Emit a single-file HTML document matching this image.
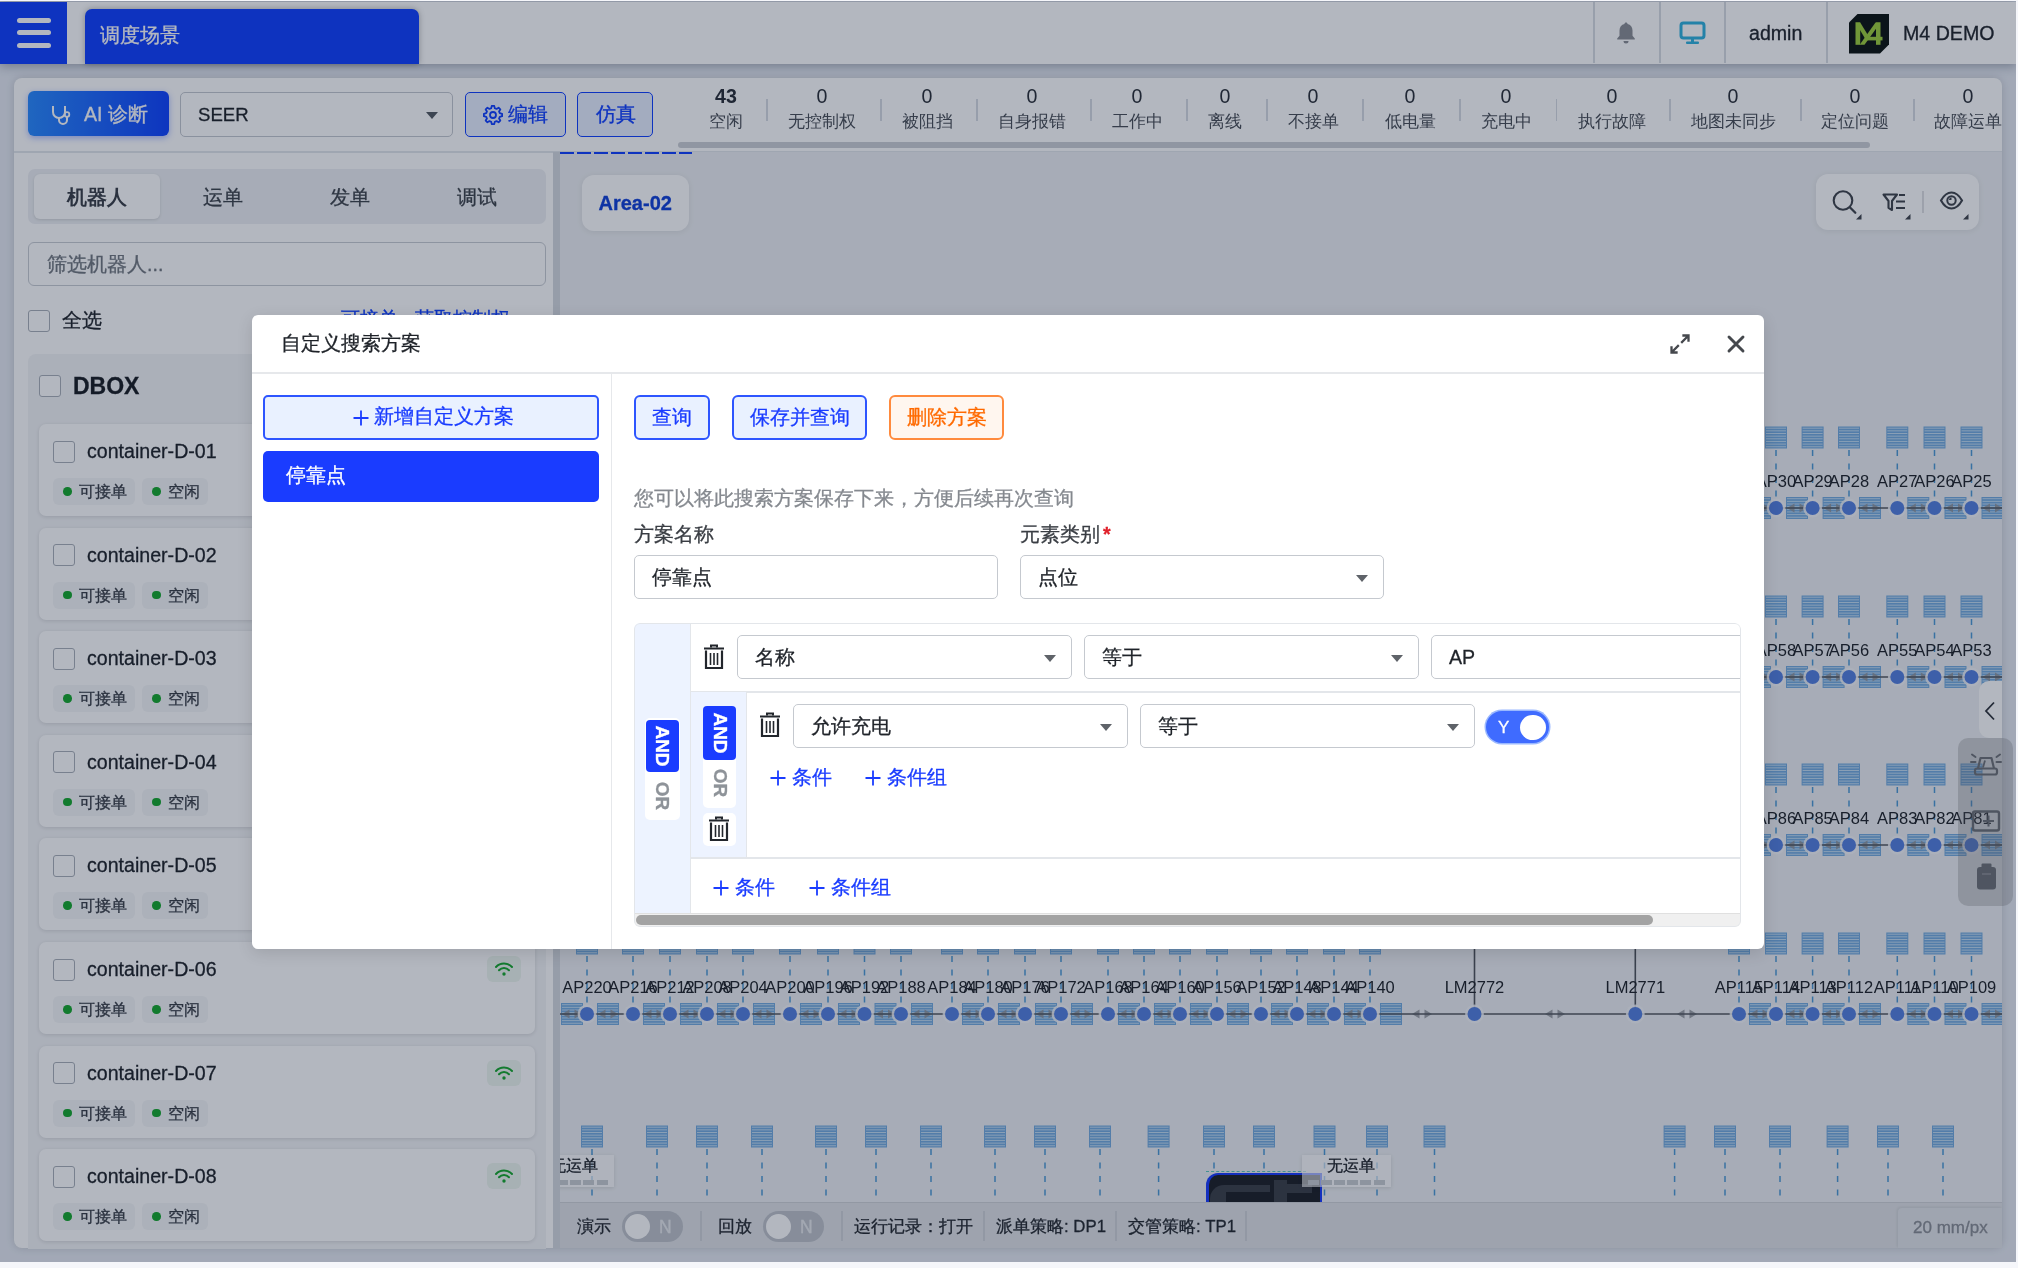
<!DOCTYPE html><html><head><meta charset="utf-8"><style>
*{box-sizing:border-box;margin:0;padding:0}
html,body{width:2018px;height:1268px;overflow:hidden;background:#f5f6fa;font-family:"Liberation Sans",sans-serif;color:#1f2329}
.a{position:absolute}
#app{position:absolute;left:0;top:1px;width:2016px;height:1261px;background:#e6eaf2;overflow:hidden;will-change:transform}
#ov{position:absolute;left:0;top:0;width:2016px;height:1261px;background:rgba(10,22,50,0.31)}
.t{position:absolute;white-space:nowrap;line-height:1;-webkit-text-stroke:0.3px currentColor}
.cb{position:absolute;width:22px;height:22px;border:1.5px solid #aab0b8;border-radius:3px;background:#fff}
.card{position:absolute;left:39px;width:496px;height:92px;background:#fff;border-radius:7px;box-shadow:0 1px 4px rgba(0,0,0,.12)}
.tag{position:absolute;height:27px;border-radius:6px;background:#f5f6f8;font-size:16.4px;color:#3a3f47;line-height:27px;-webkit-text-stroke:0.3px currentColor}
.dot{position:absolute;width:8.5px;height:8.5px;border-radius:50%;background:#17a82e;top:9px}
.sep{position:absolute;width:1.5px;background:#d7dbe2}
.stn{position:absolute;font-size:19.6px;color:#2a2f37;text-align:center;line-height:1}
.stl{position:absolute;font-size:16.8px;color:#4a4f57;text-align:center;line-height:1}
</style></head><body>
<div id="app">
<div class="a" style="left:0;top:1px;width:2016px;height:61.5px;background:#ffffff;box-shadow:0 2px 10px rgba(30,40,60,.35)"></div>
<div class="a" style="left:0;top:1px;width:67px;height:61.5px;background:#1040ff"></div>
<div class="a" style="left:17px;top:17.2px;width:34px;height:5px;border-radius:3px;background:#fff"></div>
<div class="a" style="left:17px;top:29.2px;width:34px;height:5px;border-radius:3px;background:#fff"></div>
<div class="a" style="left:17px;top:41.5px;width:34px;height:5px;border-radius:3px;background:#fff"></div>
<div class="a" style="left:85px;top:8px;width:334px;height:54.5px;background:#1040ff;border-radius:7px 7px 0 0;box-shadow:0 0 6px rgba(0,0,0,.3)"></div>
<div class="t" style="left:100px;top:25px;font-size:19.6px;color:#fff">调度场景</div>
<div class="a" style="left:1593px;top:1px;width:1.5px;height:61px;background:#d8dce3"></div>
<div class="a" style="left:1659px;top:1px;width:1.5px;height:61px;background:#d8dce3"></div>
<div class="a" style="left:1724px;top:1px;width:1.5px;height:61px;background:#d8dce3"></div>
<div class="a" style="left:1826px;top:1px;width:1.5px;height:61px;background:#d8dce3"></div>
<svg class="a" style="left:1615px;top:20px" width="22" height="24" viewBox="0 0 22 24"><path d="M11 1.5c.9 0 1.5.6 1.5 1.4 3.2.7 5 3.3 5 6.6v5.2l2.3 2.8v1H2.2v-1l2.3-2.8V9.5c0-3.3 1.8-5.9 5-6.6 0-.8.6-1.4 1.5-1.4z" fill="#8b8e94"/><path d="M8.5 20h5a2.5 2.5 0 0 1-5 0z" fill="#8b8e94"/></svg>
<svg class="a" style="left:1679px;top:20px" width="27" height="24" viewBox="0 0 27 24"><rect x="2" y="2" width="23" height="15" rx="2.5" fill="none" stroke="#30b2de" stroke-width="3"/><rect x="12" y="17" width="3" height="4" fill="#30b2de"/><rect x="7" y="20.5" width="13" height="2.5" rx="1" fill="#30b2de"/></svg>
<div class="t" style="left:1749px;top:23px;font-size:19.6px;color:#22262c">admin</div>
<svg class="a" style="left:1849px;top:13px" width="40" height="40" viewBox="0 0 40 40"><path d="M8.5 0H40V30.5L31 39.5H0V8.5Z" fill="#0d1411"/><g fill="#9fcf3c"><rect x="6.5" y="8.5" width="4.7" height="22.3"/><path d="M6.5 8.5h4.7l8.3 13.5-2.4 4.2z"/><path d="M26.5 8.5h5L15.5 30.8h-4.8z"/><rect x="17" y="22.8" width="16.5" height="3.6"/><rect x="27" y="8.5" width="4.5" height="22.3"/></g></svg>
<div class="t" style="left:1903px;top:23px;font-size:19.6px;color:#22262c">M4 DEMO</div>
<div class="a" style="left:14px;top:77px;width:1988px;height:1170px;background:#fff;border-radius:8px;box-shadow:0 0 8px rgba(0,0,0,.15)"></div>
<div class="a" style="left:28px;top:90px;width:141px;height:45px;border-radius:6px;background:linear-gradient(90deg,#2a8aff,#1043ff);box-shadow:0 2px 6px rgba(16,64,255,.35)"></div>
<svg class="a" style="left:50px;top:103px" width="22" height="22" viewBox="0 0 22 22"><path d="M3 2v6a6 6 0 0 0 12 0V2" fill="none" stroke="#fff" stroke-width="2"/><path d="M9 14v2a4 4 0 0 0 8 0v-3" fill="none" stroke="#fff" stroke-width="2"/><circle cx="17" cy="10.5" r="2.3" fill="none" stroke="#fff" stroke-width="1.8"/></svg>
<div class="t" style="left:84px;top:104px;font-size:19.6px;color:#fff">AI 诊断</div>
<div class="a" style="left:180px;top:91px;width:273px;height:45px;border:1.5px solid #c4c8cf;border-radius:5px;background:#fff"></div>
<div class="t" style="left:198px;top:104.5px;font-size:18.6px;color:#1f2329">SEER</div>
<div class="a" style="left:426px;top:111px;width:0;height:0;border-left:6px solid transparent;border-right:6px solid transparent;border-top:7px solid #555a61"></div>
<div class="a" style="left:465px;top:91px;width:101px;height:45px;border:1.5px solid #1040ff;border-radius:5px;background:#e8efff"></div>
<svg class="a" style="left:483px;top:104px" width="20" height="20" viewBox="0 0 20 20"><path d="M19.12 8.78 L19.12 11.22 L16.77 11.79 L16.05 13.52 L17.31 15.58 L15.58 17.31 L13.52 16.05 L11.79 16.77 L11.22 19.12 L8.78 19.12 L8.21 16.77 L6.48 16.05 L4.42 17.31 L2.69 15.58 L3.95 13.52 L3.23 11.79 L0.88 11.22 L0.88 8.78 L3.23 8.21 L3.95 6.48 L2.69 4.42 L4.42 2.69 L6.48 3.95 L8.21 3.23 L8.78 0.88 L11.22 0.88 L11.79 3.23 L13.52 3.95 L15.58 2.69 L17.31 4.42 L16.05 6.48 L16.77 8.21Z" fill="none" stroke="#1040ff" stroke-width="1.8" stroke-linejoin="round"/><circle cx="10" cy="10" r="3" fill="none" stroke="#1040ff" stroke-width="1.8"/></svg>
<div class="t" style="left:508px;top:104px;font-size:19.6px;color:#1040ff">编辑</div>
<div class="a" style="left:577px;top:91px;width:76px;height:45px;border:1.5px solid #1040ff;border-radius:5px;background:#e8efff"></div>
<div class="t" style="left:596px;top:104px;font-size:19.6px;color:#1040ff">仿真</div>
<div class="stn" style="left:666px;top:86px;width:120px;font-weight:bold;">43</div>
<div class="stl" style="left:656px;top:113px;width:140px;">空闲</div>
<div class="stn" style="left:762px;top:86px;width:120px;">0</div>
<div class="stl" style="left:752px;top:113px;width:140px;">无控制权</div>
<div class="stn" style="left:867px;top:86px;width:120px;">0</div>
<div class="stl" style="left:857px;top:113px;width:140px;">被阻挡</div>
<div class="stn" style="left:972px;top:86px;width:120px;">0</div>
<div class="stl" style="left:962px;top:113px;width:140px;">自身报错</div>
<div class="stn" style="left:1077px;top:86px;width:120px;">0</div>
<div class="stl" style="left:1067px;top:113px;width:140px;">工作中</div>
<div class="stn" style="left:1165px;top:86px;width:120px;">0</div>
<div class="stl" style="left:1155px;top:113px;width:140px;">离线</div>
<div class="stn" style="left:1253px;top:86px;width:120px;">0</div>
<div class="stl" style="left:1243px;top:113px;width:140px;">不接单</div>
<div class="stn" style="left:1350px;top:86px;width:120px;">0</div>
<div class="stl" style="left:1340px;top:113px;width:140px;">低电量</div>
<div class="stn" style="left:1446px;top:86px;width:120px;">0</div>
<div class="stl" style="left:1436px;top:113px;width:140px;">充电中</div>
<div class="stn" style="left:1552px;top:86px;width:120px;">0</div>
<div class="stl" style="left:1542px;top:113px;width:140px;">执行故障</div>
<div class="stn" style="left:1673px;top:86px;width:120px;">0</div>
<div class="stl" style="left:1663px;top:113px;width:140px;">地图未同步</div>
<div class="stn" style="left:1795px;top:86px;width:120px;">0</div>
<div class="stl" style="left:1785px;top:113px;width:140px;">定位问题</div>
<div class="stn" style="left:1908px;top:86px;width:120px;">0</div>
<div class="stl" style="left:1898px;top:113px;width:140px;">故障运单</div>
<div class="sep" style="left:766.0px;top:98px;height:22px"></div>
<div class="sep" style="left:880.0px;top:98px;height:22px"></div>
<div class="sep" style="left:976.0px;top:98px;height:22px"></div>
<div class="sep" style="left:1090.0px;top:98px;height:22px"></div>
<div class="sep" style="left:1186.0px;top:98px;height:22px"></div>
<div class="sep" style="left:1266.0px;top:98px;height:22px"></div>
<div class="sep" style="left:1362.0px;top:98px;height:22px"></div>
<div class="sep" style="left:1459.0px;top:98px;height:22px"></div>
<div class="sep" style="left:1555.5px;top:98px;height:22px"></div>
<div class="sep" style="left:1669.0px;top:98px;height:22px"></div>
<div class="sep" style="left:1800.0px;top:98px;height:22px"></div>
<div class="sep" style="left:1913.0px;top:98px;height:22px"></div>
<div class="a" style="left:678px;top:141px;width:1192px;height:6px;border-radius:3px;background:#cdd0d5"></div>
<div class="a" style="left:14px;top:150px;width:1988px;height:1.5px;background:#e3e6eb"></div>
<div class="a" style="left:28px;top:168px;width:518px;height:55px;border-radius:7px;background:#eef0f3"></div>
<div class="a" style="left:34px;top:173px;width:126px;height:45px;border-radius:6px;background:#fff;box-shadow:0 1px 3px rgba(0,0,0,.12)"></div>
<div class="t" style="left:37px;width:120px;text-align:center;top:187px;font-size:19.6px;font-weight:bold;color:#3a3f47;-webkit-text-stroke:0;">机器人</div>
<div class="t" style="left:163px;width:120px;text-align:center;top:187px;font-size:19.6px;color:#3f444c;">运单</div>
<div class="t" style="left:290px;width:120px;text-align:center;top:187px;font-size:19.6px;color:#3f444c;">发单</div>
<div class="t" style="left:417px;width:120px;text-align:center;top:187px;font-size:19.6px;color:#3f444c;">调试</div>
<div class="a" style="left:28px;top:241px;width:518px;height:44px;border:1.5px solid #c9cdd3;border-radius:6px;background:#fff"></div>
<div class="t" style="left:47px;top:254px;font-size:19.6px;color:#737980">筛选机器人...</div>
<div class="cb" style="left:28px;top:309px"></div>
<div class="t" style="left:62px;top:310px;font-size:19.6px;color:#22262c">全选</div>
<div class="t" style="left:341px;top:309px;font-size:18.7px;color:#1040ff">可接单 · 获取控制权</div>
<div class="a" style="left:28px;top:353px;width:518px;height:895px;border-radius:8px 8px 0 0;background:#f4f5f7"></div>
<div class="cb" style="left:39px;top:374px"></div>
<div class="t" style="left:73px;top:374px;font-size:23px;font-weight:bold;color:#1a1e24">DBOX</div>
<div class="card" style="top:423.0px"></div>
<div class="cb" style="left:53px;top:439.5px"></div>
<div class="t" style="left:87px;top:441.0px;font-size:19.6px;color:#1f2329">container-D-01</div>
<div class="tag" style="left:53px;top:477.0px;width:82px"><span class="dot" style="left:10px"></span><span style="position:absolute;left:25.5px;top:0">可接单</span></div>
<div class="tag" style="left:142px;top:477.0px;width:66px"><span class="dot" style="left:10px"></span><span style="position:absolute;left:25.5px;top:0">空闲</span></div>
<div class="card" style="top:526.6px"></div>
<div class="cb" style="left:53px;top:543.1px"></div>
<div class="t" style="left:87px;top:544.6px;font-size:19.6px;color:#1f2329">container-D-02</div>
<div class="tag" style="left:53px;top:580.6px;width:82px"><span class="dot" style="left:10px"></span><span style="position:absolute;left:25.5px;top:0">可接单</span></div>
<div class="tag" style="left:142px;top:580.6px;width:66px"><span class="dot" style="left:10px"></span><span style="position:absolute;left:25.5px;top:0">空闲</span></div>
<div class="card" style="top:630.2px"></div>
<div class="cb" style="left:53px;top:646.7px"></div>
<div class="t" style="left:87px;top:648.2px;font-size:19.6px;color:#1f2329">container-D-03</div>
<div class="tag" style="left:53px;top:684.2px;width:82px"><span class="dot" style="left:10px"></span><span style="position:absolute;left:25.5px;top:0">可接单</span></div>
<div class="tag" style="left:142px;top:684.2px;width:66px"><span class="dot" style="left:10px"></span><span style="position:absolute;left:25.5px;top:0">空闲</span></div>
<div class="card" style="top:733.8px"></div>
<div class="cb" style="left:53px;top:750.3px"></div>
<div class="t" style="left:87px;top:751.8px;font-size:19.6px;color:#1f2329">container-D-04</div>
<div class="tag" style="left:53px;top:787.8px;width:82px"><span class="dot" style="left:10px"></span><span style="position:absolute;left:25.5px;top:0">可接单</span></div>
<div class="tag" style="left:142px;top:787.8px;width:66px"><span class="dot" style="left:10px"></span><span style="position:absolute;left:25.5px;top:0">空闲</span></div>
<div class="card" style="top:837.4px"></div>
<div class="cb" style="left:53px;top:853.9px"></div>
<div class="t" style="left:87px;top:855.4px;font-size:19.6px;color:#1f2329">container-D-05</div>
<div class="tag" style="left:53px;top:891.4px;width:82px"><span class="dot" style="left:10px"></span><span style="position:absolute;left:25.5px;top:0">可接单</span></div>
<div class="tag" style="left:142px;top:891.4px;width:66px"><span class="dot" style="left:10px"></span><span style="position:absolute;left:25.5px;top:0">空闲</span></div>
<div class="card" style="top:941.0px"></div>
<div class="cb" style="left:53px;top:957.5px"></div>
<div class="t" style="left:87px;top:959.0px;font-size:19.6px;color:#1f2329">container-D-06</div>
<div class="tag" style="left:53px;top:995.0px;width:82px"><span class="dot" style="left:10px"></span><span style="position:absolute;left:25.5px;top:0">可接单</span></div>
<div class="tag" style="left:142px;top:995.0px;width:66px"><span class="dot" style="left:10px"></span><span style="position:absolute;left:25.5px;top:0">空闲</span></div>
<div class="a" style="left:487px;top:955.0px;width:34px;height:26px;border-radius:6px;background:#eef6ef"></div>
<svg class="a" style="left:494px;top:959.0px" width="20" height="18" viewBox="0 0 20 18"><path d="M2 7a11 11 0 0 1 16 0" fill="none" stroke="#17a82e" stroke-width="2" stroke-linecap="round"/><path d="M5 10.3a6.8 6.8 0 0 1 10 0" fill="none" stroke="#17a82e" stroke-width="2" stroke-linecap="round"/><circle cx="10" cy="14" r="1.7" fill="#17a82e"/></svg>
<div class="card" style="top:1044.6px"></div>
<div class="cb" style="left:53px;top:1061.1px"></div>
<div class="t" style="left:87px;top:1062.6px;font-size:19.6px;color:#1f2329">container-D-07</div>
<div class="tag" style="left:53px;top:1098.6px;width:82px"><span class="dot" style="left:10px"></span><span style="position:absolute;left:25.5px;top:0">可接单</span></div>
<div class="tag" style="left:142px;top:1098.6px;width:66px"><span class="dot" style="left:10px"></span><span style="position:absolute;left:25.5px;top:0">空闲</span></div>
<div class="a" style="left:487px;top:1058.6px;width:34px;height:26px;border-radius:6px;background:#eef6ef"></div>
<svg class="a" style="left:494px;top:1062.6px" width="20" height="18" viewBox="0 0 20 18"><path d="M2 7a11 11 0 0 1 16 0" fill="none" stroke="#17a82e" stroke-width="2" stroke-linecap="round"/><path d="M5 10.3a6.8 6.8 0 0 1 10 0" fill="none" stroke="#17a82e" stroke-width="2" stroke-linecap="round"/><circle cx="10" cy="14" r="1.7" fill="#17a82e"/></svg>
<div class="card" style="top:1148.2px"></div>
<div class="cb" style="left:53px;top:1164.7px"></div>
<div class="t" style="left:87px;top:1166.2px;font-size:19.6px;color:#1f2329">container-D-08</div>
<div class="tag" style="left:53px;top:1202.2px;width:82px"><span class="dot" style="left:10px"></span><span style="position:absolute;left:25.5px;top:0">可接单</span></div>
<div class="tag" style="left:142px;top:1202.2px;width:66px"><span class="dot" style="left:10px"></span><span style="position:absolute;left:25.5px;top:0">空闲</span></div>
<div class="a" style="left:487px;top:1162.2px;width:34px;height:26px;border-radius:6px;background:#eef6ef"></div>
<svg class="a" style="left:494px;top:1166.2px" width="20" height="18" viewBox="0 0 20 18"><path d="M2 7a11 11 0 0 1 16 0" fill="none" stroke="#17a82e" stroke-width="2" stroke-linecap="round"/><path d="M5 10.3a6.8 6.8 0 0 1 10 0" fill="none" stroke="#17a82e" stroke-width="2" stroke-linecap="round"/><circle cx="10" cy="14" r="1.7" fill="#17a82e"/></svg>
<div class="a" style="left:553px;top:151px;width:7px;height:1096px;background:#d5d9df"></div>
<div class="a" style="left:560px;top:151px;width:1442px;height:1051px;background:#eef0f3;overflow:hidden">
<svg class="a" style="left:0;top:0" width="1442" height="1051" font-family="Liberation Sans, sans-serif"><rect x="1168.0" y="274.5" width="22" height="22" fill="#74abdf"/><rect x="1169.0" y="275.70" width="20" height="1" fill="#c2dcf2"/><rect x="1169.0" y="278.35" width="20" height="1" fill="#c2dcf2"/><rect x="1169.0" y="281.00" width="20" height="1" fill="#c2dcf2"/><rect x="1169.0" y="283.65" width="20" height="1" fill="#c2dcf2"/><rect x="1169.0" y="286.30" width="20" height="1" fill="#c2dcf2"/><rect x="1169.0" y="288.95" width="20" height="1" fill="#c2dcf2"/><rect x="1169.0" y="291.60" width="20" height="1" fill="#c2dcf2"/><rect x="1169.0" y="294.25" width="20" height="1" fill="#c2dcf2"/><rect x="1189.0" y="345.0" width="22" height="22" fill="#74abdf"/><rect x="1190.0" y="346.20" width="20" height="1" fill="#c2dcf2"/><rect x="1190.0" y="348.85" width="20" height="1" fill="#c2dcf2"/><rect x="1190.0" y="351.50" width="20" height="1" fill="#c2dcf2"/><rect x="1190.0" y="354.15" width="20" height="1" fill="#c2dcf2"/><rect x="1190.0" y="356.80" width="20" height="1" fill="#c2dcf2"/><rect x="1190.0" y="359.45" width="20" height="1" fill="#c2dcf2"/><rect x="1190.0" y="362.10" width="20" height="1" fill="#c2dcf2"/><rect x="1190.0" y="364.75" width="20" height="1" fill="#c2dcf2"/><rect x="1205.0" y="274.5" width="22" height="22" fill="#74abdf"/><rect x="1206.0" y="275.70" width="20" height="1" fill="#c2dcf2"/><rect x="1206.0" y="278.35" width="20" height="1" fill="#c2dcf2"/><rect x="1206.0" y="281.00" width="20" height="1" fill="#c2dcf2"/><rect x="1206.0" y="283.65" width="20" height="1" fill="#c2dcf2"/><rect x="1206.0" y="286.30" width="20" height="1" fill="#c2dcf2"/><rect x="1206.0" y="288.95" width="20" height="1" fill="#c2dcf2"/><rect x="1206.0" y="291.60" width="20" height="1" fill="#c2dcf2"/><rect x="1206.0" y="294.25" width="20" height="1" fill="#c2dcf2"/><rect x="1226.0" y="345.0" width="22" height="22" fill="#74abdf"/><rect x="1227.0" y="346.20" width="20" height="1" fill="#c2dcf2"/><rect x="1227.0" y="348.85" width="20" height="1" fill="#c2dcf2"/><rect x="1227.0" y="351.50" width="20" height="1" fill="#c2dcf2"/><rect x="1227.0" y="354.15" width="20" height="1" fill="#c2dcf2"/><rect x="1227.0" y="356.80" width="20" height="1" fill="#c2dcf2"/><rect x="1227.0" y="359.45" width="20" height="1" fill="#c2dcf2"/><rect x="1227.0" y="362.10" width="20" height="1" fill="#c2dcf2"/><rect x="1227.0" y="364.75" width="20" height="1" fill="#c2dcf2"/><rect x="1241.6" y="274.5" width="22" height="22" fill="#74abdf"/><rect x="1242.6" y="275.70" width="20" height="1" fill="#c2dcf2"/><rect x="1242.6" y="278.35" width="20" height="1" fill="#c2dcf2"/><rect x="1242.6" y="281.00" width="20" height="1" fill="#c2dcf2"/><rect x="1242.6" y="283.65" width="20" height="1" fill="#c2dcf2"/><rect x="1242.6" y="286.30" width="20" height="1" fill="#c2dcf2"/><rect x="1242.6" y="288.95" width="20" height="1" fill="#c2dcf2"/><rect x="1242.6" y="291.60" width="20" height="1" fill="#c2dcf2"/><rect x="1242.6" y="294.25" width="20" height="1" fill="#c2dcf2"/><rect x="1262.6" y="345.0" width="22" height="22" fill="#74abdf"/><rect x="1263.6" y="346.20" width="20" height="1" fill="#c2dcf2"/><rect x="1263.6" y="348.85" width="20" height="1" fill="#c2dcf2"/><rect x="1263.6" y="351.50" width="20" height="1" fill="#c2dcf2"/><rect x="1263.6" y="354.15" width="20" height="1" fill="#c2dcf2"/><rect x="1263.6" y="356.80" width="20" height="1" fill="#c2dcf2"/><rect x="1263.6" y="359.45" width="20" height="1" fill="#c2dcf2"/><rect x="1263.6" y="362.10" width="20" height="1" fill="#c2dcf2"/><rect x="1263.6" y="364.75" width="20" height="1" fill="#c2dcf2"/><rect x="1278.0" y="274.5" width="22" height="22" fill="#74abdf"/><rect x="1279.0" y="275.70" width="20" height="1" fill="#c2dcf2"/><rect x="1279.0" y="278.35" width="20" height="1" fill="#c2dcf2"/><rect x="1279.0" y="281.00" width="20" height="1" fill="#c2dcf2"/><rect x="1279.0" y="283.65" width="20" height="1" fill="#c2dcf2"/><rect x="1279.0" y="286.30" width="20" height="1" fill="#c2dcf2"/><rect x="1279.0" y="288.95" width="20" height="1" fill="#c2dcf2"/><rect x="1279.0" y="291.60" width="20" height="1" fill="#c2dcf2"/><rect x="1279.0" y="294.25" width="20" height="1" fill="#c2dcf2"/><rect x="1299.0" y="345.0" width="22" height="22" fill="#74abdf"/><rect x="1300.0" y="346.20" width="20" height="1" fill="#c2dcf2"/><rect x="1300.0" y="348.85" width="20" height="1" fill="#c2dcf2"/><rect x="1300.0" y="351.50" width="20" height="1" fill="#c2dcf2"/><rect x="1300.0" y="354.15" width="20" height="1" fill="#c2dcf2"/><rect x="1300.0" y="356.80" width="20" height="1" fill="#c2dcf2"/><rect x="1300.0" y="359.45" width="20" height="1" fill="#c2dcf2"/><rect x="1300.0" y="362.10" width="20" height="1" fill="#c2dcf2"/><rect x="1300.0" y="364.75" width="20" height="1" fill="#c2dcf2"/><rect x="1326.3" y="274.5" width="22" height="22" fill="#74abdf"/><rect x="1327.3" y="275.70" width="20" height="1" fill="#c2dcf2"/><rect x="1327.3" y="278.35" width="20" height="1" fill="#c2dcf2"/><rect x="1327.3" y="281.00" width="20" height="1" fill="#c2dcf2"/><rect x="1327.3" y="283.65" width="20" height="1" fill="#c2dcf2"/><rect x="1327.3" y="286.30" width="20" height="1" fill="#c2dcf2"/><rect x="1327.3" y="288.95" width="20" height="1" fill="#c2dcf2"/><rect x="1327.3" y="291.60" width="20" height="1" fill="#c2dcf2"/><rect x="1327.3" y="294.25" width="20" height="1" fill="#c2dcf2"/><rect x="1347.3" y="345.0" width="22" height="22" fill="#74abdf"/><rect x="1348.3" y="346.20" width="20" height="1" fill="#c2dcf2"/><rect x="1348.3" y="348.85" width="20" height="1" fill="#c2dcf2"/><rect x="1348.3" y="351.50" width="20" height="1" fill="#c2dcf2"/><rect x="1348.3" y="354.15" width="20" height="1" fill="#c2dcf2"/><rect x="1348.3" y="356.80" width="20" height="1" fill="#c2dcf2"/><rect x="1348.3" y="359.45" width="20" height="1" fill="#c2dcf2"/><rect x="1348.3" y="362.10" width="20" height="1" fill="#c2dcf2"/><rect x="1348.3" y="364.75" width="20" height="1" fill="#c2dcf2"/><rect x="1363.5" y="274.5" width="22" height="22" fill="#74abdf"/><rect x="1364.5" y="275.70" width="20" height="1" fill="#c2dcf2"/><rect x="1364.5" y="278.35" width="20" height="1" fill="#c2dcf2"/><rect x="1364.5" y="281.00" width="20" height="1" fill="#c2dcf2"/><rect x="1364.5" y="283.65" width="20" height="1" fill="#c2dcf2"/><rect x="1364.5" y="286.30" width="20" height="1" fill="#c2dcf2"/><rect x="1364.5" y="288.95" width="20" height="1" fill="#c2dcf2"/><rect x="1364.5" y="291.60" width="20" height="1" fill="#c2dcf2"/><rect x="1364.5" y="294.25" width="20" height="1" fill="#c2dcf2"/><rect x="1384.5" y="345.0" width="22" height="22" fill="#74abdf"/><rect x="1385.5" y="346.20" width="20" height="1" fill="#c2dcf2"/><rect x="1385.5" y="348.85" width="20" height="1" fill="#c2dcf2"/><rect x="1385.5" y="351.50" width="20" height="1" fill="#c2dcf2"/><rect x="1385.5" y="354.15" width="20" height="1" fill="#c2dcf2"/><rect x="1385.5" y="356.80" width="20" height="1" fill="#c2dcf2"/><rect x="1385.5" y="359.45" width="20" height="1" fill="#c2dcf2"/><rect x="1385.5" y="362.10" width="20" height="1" fill="#c2dcf2"/><rect x="1385.5" y="364.75" width="20" height="1" fill="#c2dcf2"/><rect x="1400.5" y="274.5" width="22" height="22" fill="#74abdf"/><rect x="1401.5" y="275.70" width="20" height="1" fill="#c2dcf2"/><rect x="1401.5" y="278.35" width="20" height="1" fill="#c2dcf2"/><rect x="1401.5" y="281.00" width="20" height="1" fill="#c2dcf2"/><rect x="1401.5" y="283.65" width="20" height="1" fill="#c2dcf2"/><rect x="1401.5" y="286.30" width="20" height="1" fill="#c2dcf2"/><rect x="1401.5" y="288.95" width="20" height="1" fill="#c2dcf2"/><rect x="1401.5" y="291.60" width="20" height="1" fill="#c2dcf2"/><rect x="1401.5" y="294.25" width="20" height="1" fill="#c2dcf2"/><rect x="1421.5" y="345.0" width="22" height="22" fill="#74abdf"/><rect x="1422.5" y="346.20" width="20" height="1" fill="#c2dcf2"/><rect x="1422.5" y="348.85" width="20" height="1" fill="#c2dcf2"/><rect x="1422.5" y="351.50" width="20" height="1" fill="#c2dcf2"/><rect x="1422.5" y="354.15" width="20" height="1" fill="#c2dcf2"/><rect x="1422.5" y="356.80" width="20" height="1" fill="#c2dcf2"/><rect x="1422.5" y="359.45" width="20" height="1" fill="#c2dcf2"/><rect x="1422.5" y="362.10" width="20" height="1" fill="#c2dcf2"/><rect x="1422.5" y="364.75" width="20" height="1" fill="#c2dcf2"/><rect x="1168.0" y="443.5" width="22" height="22" fill="#74abdf"/><rect x="1169.0" y="444.70" width="20" height="1" fill="#c2dcf2"/><rect x="1169.0" y="447.35" width="20" height="1" fill="#c2dcf2"/><rect x="1169.0" y="450.00" width="20" height="1" fill="#c2dcf2"/><rect x="1169.0" y="452.65" width="20" height="1" fill="#c2dcf2"/><rect x="1169.0" y="455.30" width="20" height="1" fill="#c2dcf2"/><rect x="1169.0" y="457.95" width="20" height="1" fill="#c2dcf2"/><rect x="1169.0" y="460.60" width="20" height="1" fill="#c2dcf2"/><rect x="1169.0" y="463.25" width="20" height="1" fill="#c2dcf2"/><rect x="1189.0" y="514.0" width="22" height="22" fill="#74abdf"/><rect x="1190.0" y="515.20" width="20" height="1" fill="#c2dcf2"/><rect x="1190.0" y="517.85" width="20" height="1" fill="#c2dcf2"/><rect x="1190.0" y="520.50" width="20" height="1" fill="#c2dcf2"/><rect x="1190.0" y="523.15" width="20" height="1" fill="#c2dcf2"/><rect x="1190.0" y="525.80" width="20" height="1" fill="#c2dcf2"/><rect x="1190.0" y="528.45" width="20" height="1" fill="#c2dcf2"/><rect x="1190.0" y="531.10" width="20" height="1" fill="#c2dcf2"/><rect x="1190.0" y="533.75" width="20" height="1" fill="#c2dcf2"/><rect x="1205.0" y="443.5" width="22" height="22" fill="#74abdf"/><rect x="1206.0" y="444.70" width="20" height="1" fill="#c2dcf2"/><rect x="1206.0" y="447.35" width="20" height="1" fill="#c2dcf2"/><rect x="1206.0" y="450.00" width="20" height="1" fill="#c2dcf2"/><rect x="1206.0" y="452.65" width="20" height="1" fill="#c2dcf2"/><rect x="1206.0" y="455.30" width="20" height="1" fill="#c2dcf2"/><rect x="1206.0" y="457.95" width="20" height="1" fill="#c2dcf2"/><rect x="1206.0" y="460.60" width="20" height="1" fill="#c2dcf2"/><rect x="1206.0" y="463.25" width="20" height="1" fill="#c2dcf2"/><rect x="1226.0" y="514.0" width="22" height="22" fill="#74abdf"/><rect x="1227.0" y="515.20" width="20" height="1" fill="#c2dcf2"/><rect x="1227.0" y="517.85" width="20" height="1" fill="#c2dcf2"/><rect x="1227.0" y="520.50" width="20" height="1" fill="#c2dcf2"/><rect x="1227.0" y="523.15" width="20" height="1" fill="#c2dcf2"/><rect x="1227.0" y="525.80" width="20" height="1" fill="#c2dcf2"/><rect x="1227.0" y="528.45" width="20" height="1" fill="#c2dcf2"/><rect x="1227.0" y="531.10" width="20" height="1" fill="#c2dcf2"/><rect x="1227.0" y="533.75" width="20" height="1" fill="#c2dcf2"/><rect x="1241.6" y="443.5" width="22" height="22" fill="#74abdf"/><rect x="1242.6" y="444.70" width="20" height="1" fill="#c2dcf2"/><rect x="1242.6" y="447.35" width="20" height="1" fill="#c2dcf2"/><rect x="1242.6" y="450.00" width="20" height="1" fill="#c2dcf2"/><rect x="1242.6" y="452.65" width="20" height="1" fill="#c2dcf2"/><rect x="1242.6" y="455.30" width="20" height="1" fill="#c2dcf2"/><rect x="1242.6" y="457.95" width="20" height="1" fill="#c2dcf2"/><rect x="1242.6" y="460.60" width="20" height="1" fill="#c2dcf2"/><rect x="1242.6" y="463.25" width="20" height="1" fill="#c2dcf2"/><rect x="1262.6" y="514.0" width="22" height="22" fill="#74abdf"/><rect x="1263.6" y="515.20" width="20" height="1" fill="#c2dcf2"/><rect x="1263.6" y="517.85" width="20" height="1" fill="#c2dcf2"/><rect x="1263.6" y="520.50" width="20" height="1" fill="#c2dcf2"/><rect x="1263.6" y="523.15" width="20" height="1" fill="#c2dcf2"/><rect x="1263.6" y="525.80" width="20" height="1" fill="#c2dcf2"/><rect x="1263.6" y="528.45" width="20" height="1" fill="#c2dcf2"/><rect x="1263.6" y="531.10" width="20" height="1" fill="#c2dcf2"/><rect x="1263.6" y="533.75" width="20" height="1" fill="#c2dcf2"/><rect x="1278.0" y="443.5" width="22" height="22" fill="#74abdf"/><rect x="1279.0" y="444.70" width="20" height="1" fill="#c2dcf2"/><rect x="1279.0" y="447.35" width="20" height="1" fill="#c2dcf2"/><rect x="1279.0" y="450.00" width="20" height="1" fill="#c2dcf2"/><rect x="1279.0" y="452.65" width="20" height="1" fill="#c2dcf2"/><rect x="1279.0" y="455.30" width="20" height="1" fill="#c2dcf2"/><rect x="1279.0" y="457.95" width="20" height="1" fill="#c2dcf2"/><rect x="1279.0" y="460.60" width="20" height="1" fill="#c2dcf2"/><rect x="1279.0" y="463.25" width="20" height="1" fill="#c2dcf2"/><rect x="1299.0" y="514.0" width="22" height="22" fill="#74abdf"/><rect x="1300.0" y="515.20" width="20" height="1" fill="#c2dcf2"/><rect x="1300.0" y="517.85" width="20" height="1" fill="#c2dcf2"/><rect x="1300.0" y="520.50" width="20" height="1" fill="#c2dcf2"/><rect x="1300.0" y="523.15" width="20" height="1" fill="#c2dcf2"/><rect x="1300.0" y="525.80" width="20" height="1" fill="#c2dcf2"/><rect x="1300.0" y="528.45" width="20" height="1" fill="#c2dcf2"/><rect x="1300.0" y="531.10" width="20" height="1" fill="#c2dcf2"/><rect x="1300.0" y="533.75" width="20" height="1" fill="#c2dcf2"/><rect x="1326.3" y="443.5" width="22" height="22" fill="#74abdf"/><rect x="1327.3" y="444.70" width="20" height="1" fill="#c2dcf2"/><rect x="1327.3" y="447.35" width="20" height="1" fill="#c2dcf2"/><rect x="1327.3" y="450.00" width="20" height="1" fill="#c2dcf2"/><rect x="1327.3" y="452.65" width="20" height="1" fill="#c2dcf2"/><rect x="1327.3" y="455.30" width="20" height="1" fill="#c2dcf2"/><rect x="1327.3" y="457.95" width="20" height="1" fill="#c2dcf2"/><rect x="1327.3" y="460.60" width="20" height="1" fill="#c2dcf2"/><rect x="1327.3" y="463.25" width="20" height="1" fill="#c2dcf2"/><rect x="1347.3" y="514.0" width="22" height="22" fill="#74abdf"/><rect x="1348.3" y="515.20" width="20" height="1" fill="#c2dcf2"/><rect x="1348.3" y="517.85" width="20" height="1" fill="#c2dcf2"/><rect x="1348.3" y="520.50" width="20" height="1" fill="#c2dcf2"/><rect x="1348.3" y="523.15" width="20" height="1" fill="#c2dcf2"/><rect x="1348.3" y="525.80" width="20" height="1" fill="#c2dcf2"/><rect x="1348.3" y="528.45" width="20" height="1" fill="#c2dcf2"/><rect x="1348.3" y="531.10" width="20" height="1" fill="#c2dcf2"/><rect x="1348.3" y="533.75" width="20" height="1" fill="#c2dcf2"/><rect x="1363.5" y="443.5" width="22" height="22" fill="#74abdf"/><rect x="1364.5" y="444.70" width="20" height="1" fill="#c2dcf2"/><rect x="1364.5" y="447.35" width="20" height="1" fill="#c2dcf2"/><rect x="1364.5" y="450.00" width="20" height="1" fill="#c2dcf2"/><rect x="1364.5" y="452.65" width="20" height="1" fill="#c2dcf2"/><rect x="1364.5" y="455.30" width="20" height="1" fill="#c2dcf2"/><rect x="1364.5" y="457.95" width="20" height="1" fill="#c2dcf2"/><rect x="1364.5" y="460.60" width="20" height="1" fill="#c2dcf2"/><rect x="1364.5" y="463.25" width="20" height="1" fill="#c2dcf2"/><rect x="1384.5" y="514.0" width="22" height="22" fill="#74abdf"/><rect x="1385.5" y="515.20" width="20" height="1" fill="#c2dcf2"/><rect x="1385.5" y="517.85" width="20" height="1" fill="#c2dcf2"/><rect x="1385.5" y="520.50" width="20" height="1" fill="#c2dcf2"/><rect x="1385.5" y="523.15" width="20" height="1" fill="#c2dcf2"/><rect x="1385.5" y="525.80" width="20" height="1" fill="#c2dcf2"/><rect x="1385.5" y="528.45" width="20" height="1" fill="#c2dcf2"/><rect x="1385.5" y="531.10" width="20" height="1" fill="#c2dcf2"/><rect x="1385.5" y="533.75" width="20" height="1" fill="#c2dcf2"/><rect x="1400.5" y="443.5" width="22" height="22" fill="#74abdf"/><rect x="1401.5" y="444.70" width="20" height="1" fill="#c2dcf2"/><rect x="1401.5" y="447.35" width="20" height="1" fill="#c2dcf2"/><rect x="1401.5" y="450.00" width="20" height="1" fill="#c2dcf2"/><rect x="1401.5" y="452.65" width="20" height="1" fill="#c2dcf2"/><rect x="1401.5" y="455.30" width="20" height="1" fill="#c2dcf2"/><rect x="1401.5" y="457.95" width="20" height="1" fill="#c2dcf2"/><rect x="1401.5" y="460.60" width="20" height="1" fill="#c2dcf2"/><rect x="1401.5" y="463.25" width="20" height="1" fill="#c2dcf2"/><rect x="1421.5" y="514.0" width="22" height="22" fill="#74abdf"/><rect x="1422.5" y="515.20" width="20" height="1" fill="#c2dcf2"/><rect x="1422.5" y="517.85" width="20" height="1" fill="#c2dcf2"/><rect x="1422.5" y="520.50" width="20" height="1" fill="#c2dcf2"/><rect x="1422.5" y="523.15" width="20" height="1" fill="#c2dcf2"/><rect x="1422.5" y="525.80" width="20" height="1" fill="#c2dcf2"/><rect x="1422.5" y="528.45" width="20" height="1" fill="#c2dcf2"/><rect x="1422.5" y="531.10" width="20" height="1" fill="#c2dcf2"/><rect x="1422.5" y="533.75" width="20" height="1" fill="#c2dcf2"/><rect x="1168.0" y="611.5" width="22" height="22" fill="#74abdf"/><rect x="1169.0" y="612.70" width="20" height="1" fill="#c2dcf2"/><rect x="1169.0" y="615.35" width="20" height="1" fill="#c2dcf2"/><rect x="1169.0" y="618.00" width="20" height="1" fill="#c2dcf2"/><rect x="1169.0" y="620.65" width="20" height="1" fill="#c2dcf2"/><rect x="1169.0" y="623.30" width="20" height="1" fill="#c2dcf2"/><rect x="1169.0" y="625.95" width="20" height="1" fill="#c2dcf2"/><rect x="1169.0" y="628.60" width="20" height="1" fill="#c2dcf2"/><rect x="1169.0" y="631.25" width="20" height="1" fill="#c2dcf2"/><rect x="1189.0" y="682.0" width="22" height="22" fill="#74abdf"/><rect x="1190.0" y="683.20" width="20" height="1" fill="#c2dcf2"/><rect x="1190.0" y="685.85" width="20" height="1" fill="#c2dcf2"/><rect x="1190.0" y="688.50" width="20" height="1" fill="#c2dcf2"/><rect x="1190.0" y="691.15" width="20" height="1" fill="#c2dcf2"/><rect x="1190.0" y="693.80" width="20" height="1" fill="#c2dcf2"/><rect x="1190.0" y="696.45" width="20" height="1" fill="#c2dcf2"/><rect x="1190.0" y="699.10" width="20" height="1" fill="#c2dcf2"/><rect x="1190.0" y="701.75" width="20" height="1" fill="#c2dcf2"/><rect x="1205.0" y="611.5" width="22" height="22" fill="#74abdf"/><rect x="1206.0" y="612.70" width="20" height="1" fill="#c2dcf2"/><rect x="1206.0" y="615.35" width="20" height="1" fill="#c2dcf2"/><rect x="1206.0" y="618.00" width="20" height="1" fill="#c2dcf2"/><rect x="1206.0" y="620.65" width="20" height="1" fill="#c2dcf2"/><rect x="1206.0" y="623.30" width="20" height="1" fill="#c2dcf2"/><rect x="1206.0" y="625.95" width="20" height="1" fill="#c2dcf2"/><rect x="1206.0" y="628.60" width="20" height="1" fill="#c2dcf2"/><rect x="1206.0" y="631.25" width="20" height="1" fill="#c2dcf2"/><rect x="1226.0" y="682.0" width="22" height="22" fill="#74abdf"/><rect x="1227.0" y="683.20" width="20" height="1" fill="#c2dcf2"/><rect x="1227.0" y="685.85" width="20" height="1" fill="#c2dcf2"/><rect x="1227.0" y="688.50" width="20" height="1" fill="#c2dcf2"/><rect x="1227.0" y="691.15" width="20" height="1" fill="#c2dcf2"/><rect x="1227.0" y="693.80" width="20" height="1" fill="#c2dcf2"/><rect x="1227.0" y="696.45" width="20" height="1" fill="#c2dcf2"/><rect x="1227.0" y="699.10" width="20" height="1" fill="#c2dcf2"/><rect x="1227.0" y="701.75" width="20" height="1" fill="#c2dcf2"/><rect x="1241.6" y="611.5" width="22" height="22" fill="#74abdf"/><rect x="1242.6" y="612.70" width="20" height="1" fill="#c2dcf2"/><rect x="1242.6" y="615.35" width="20" height="1" fill="#c2dcf2"/><rect x="1242.6" y="618.00" width="20" height="1" fill="#c2dcf2"/><rect x="1242.6" y="620.65" width="20" height="1" fill="#c2dcf2"/><rect x="1242.6" y="623.30" width="20" height="1" fill="#c2dcf2"/><rect x="1242.6" y="625.95" width="20" height="1" fill="#c2dcf2"/><rect x="1242.6" y="628.60" width="20" height="1" fill="#c2dcf2"/><rect x="1242.6" y="631.25" width="20" height="1" fill="#c2dcf2"/><rect x="1262.6" y="682.0" width="22" height="22" fill="#74abdf"/><rect x="1263.6" y="683.20" width="20" height="1" fill="#c2dcf2"/><rect x="1263.6" y="685.85" width="20" height="1" fill="#c2dcf2"/><rect x="1263.6" y="688.50" width="20" height="1" fill="#c2dcf2"/><rect x="1263.6" y="691.15" width="20" height="1" fill="#c2dcf2"/><rect x="1263.6" y="693.80" width="20" height="1" fill="#c2dcf2"/><rect x="1263.6" y="696.45" width="20" height="1" fill="#c2dcf2"/><rect x="1263.6" y="699.10" width="20" height="1" fill="#c2dcf2"/><rect x="1263.6" y="701.75" width="20" height="1" fill="#c2dcf2"/><rect x="1278.0" y="611.5" width="22" height="22" fill="#74abdf"/><rect x="1279.0" y="612.70" width="20" height="1" fill="#c2dcf2"/><rect x="1279.0" y="615.35" width="20" height="1" fill="#c2dcf2"/><rect x="1279.0" y="618.00" width="20" height="1" fill="#c2dcf2"/><rect x="1279.0" y="620.65" width="20" height="1" fill="#c2dcf2"/><rect x="1279.0" y="623.30" width="20" height="1" fill="#c2dcf2"/><rect x="1279.0" y="625.95" width="20" height="1" fill="#c2dcf2"/><rect x="1279.0" y="628.60" width="20" height="1" fill="#c2dcf2"/><rect x="1279.0" y="631.25" width="20" height="1" fill="#c2dcf2"/><rect x="1299.0" y="682.0" width="22" height="22" fill="#74abdf"/><rect x="1300.0" y="683.20" width="20" height="1" fill="#c2dcf2"/><rect x="1300.0" y="685.85" width="20" height="1" fill="#c2dcf2"/><rect x="1300.0" y="688.50" width="20" height="1" fill="#c2dcf2"/><rect x="1300.0" y="691.15" width="20" height="1" fill="#c2dcf2"/><rect x="1300.0" y="693.80" width="20" height="1" fill="#c2dcf2"/><rect x="1300.0" y="696.45" width="20" height="1" fill="#c2dcf2"/><rect x="1300.0" y="699.10" width="20" height="1" fill="#c2dcf2"/><rect x="1300.0" y="701.75" width="20" height="1" fill="#c2dcf2"/><rect x="1326.3" y="611.5" width="22" height="22" fill="#74abdf"/><rect x="1327.3" y="612.70" width="20" height="1" fill="#c2dcf2"/><rect x="1327.3" y="615.35" width="20" height="1" fill="#c2dcf2"/><rect x="1327.3" y="618.00" width="20" height="1" fill="#c2dcf2"/><rect x="1327.3" y="620.65" width="20" height="1" fill="#c2dcf2"/><rect x="1327.3" y="623.30" width="20" height="1" fill="#c2dcf2"/><rect x="1327.3" y="625.95" width="20" height="1" fill="#c2dcf2"/><rect x="1327.3" y="628.60" width="20" height="1" fill="#c2dcf2"/><rect x="1327.3" y="631.25" width="20" height="1" fill="#c2dcf2"/><rect x="1347.3" y="682.0" width="22" height="22" fill="#74abdf"/><rect x="1348.3" y="683.20" width="20" height="1" fill="#c2dcf2"/><rect x="1348.3" y="685.85" width="20" height="1" fill="#c2dcf2"/><rect x="1348.3" y="688.50" width="20" height="1" fill="#c2dcf2"/><rect x="1348.3" y="691.15" width="20" height="1" fill="#c2dcf2"/><rect x="1348.3" y="693.80" width="20" height="1" fill="#c2dcf2"/><rect x="1348.3" y="696.45" width="20" height="1" fill="#c2dcf2"/><rect x="1348.3" y="699.10" width="20" height="1" fill="#c2dcf2"/><rect x="1348.3" y="701.75" width="20" height="1" fill="#c2dcf2"/><rect x="1363.5" y="611.5" width="22" height="22" fill="#74abdf"/><rect x="1364.5" y="612.70" width="20" height="1" fill="#c2dcf2"/><rect x="1364.5" y="615.35" width="20" height="1" fill="#c2dcf2"/><rect x="1364.5" y="618.00" width="20" height="1" fill="#c2dcf2"/><rect x="1364.5" y="620.65" width="20" height="1" fill="#c2dcf2"/><rect x="1364.5" y="623.30" width="20" height="1" fill="#c2dcf2"/><rect x="1364.5" y="625.95" width="20" height="1" fill="#c2dcf2"/><rect x="1364.5" y="628.60" width="20" height="1" fill="#c2dcf2"/><rect x="1364.5" y="631.25" width="20" height="1" fill="#c2dcf2"/><rect x="1384.5" y="682.0" width="22" height="22" fill="#74abdf"/><rect x="1385.5" y="683.20" width="20" height="1" fill="#c2dcf2"/><rect x="1385.5" y="685.85" width="20" height="1" fill="#c2dcf2"/><rect x="1385.5" y="688.50" width="20" height="1" fill="#c2dcf2"/><rect x="1385.5" y="691.15" width="20" height="1" fill="#c2dcf2"/><rect x="1385.5" y="693.80" width="20" height="1" fill="#c2dcf2"/><rect x="1385.5" y="696.45" width="20" height="1" fill="#c2dcf2"/><rect x="1385.5" y="699.10" width="20" height="1" fill="#c2dcf2"/><rect x="1385.5" y="701.75" width="20" height="1" fill="#c2dcf2"/><rect x="1400.5" y="611.5" width="22" height="22" fill="#74abdf"/><rect x="1401.5" y="612.70" width="20" height="1" fill="#c2dcf2"/><rect x="1401.5" y="615.35" width="20" height="1" fill="#c2dcf2"/><rect x="1401.5" y="618.00" width="20" height="1" fill="#c2dcf2"/><rect x="1401.5" y="620.65" width="20" height="1" fill="#c2dcf2"/><rect x="1401.5" y="623.30" width="20" height="1" fill="#c2dcf2"/><rect x="1401.5" y="625.95" width="20" height="1" fill="#c2dcf2"/><rect x="1401.5" y="628.60" width="20" height="1" fill="#c2dcf2"/><rect x="1401.5" y="631.25" width="20" height="1" fill="#c2dcf2"/><rect x="1421.5" y="682.0" width="22" height="22" fill="#74abdf"/><rect x="1422.5" y="683.20" width="20" height="1" fill="#c2dcf2"/><rect x="1422.5" y="685.85" width="20" height="1" fill="#c2dcf2"/><rect x="1422.5" y="688.50" width="20" height="1" fill="#c2dcf2"/><rect x="1422.5" y="691.15" width="20" height="1" fill="#c2dcf2"/><rect x="1422.5" y="693.80" width="20" height="1" fill="#c2dcf2"/><rect x="1422.5" y="696.45" width="20" height="1" fill="#c2dcf2"/><rect x="1422.5" y="699.10" width="20" height="1" fill="#c2dcf2"/><rect x="1422.5" y="701.75" width="20" height="1" fill="#c2dcf2"/><rect x="16.0" y="780.5" width="22" height="22" fill="#74abdf"/><rect x="17.0" y="781.70" width="20" height="1" fill="#c2dcf2"/><rect x="17.0" y="784.35" width="20" height="1" fill="#c2dcf2"/><rect x="17.0" y="787.00" width="20" height="1" fill="#c2dcf2"/><rect x="17.0" y="789.65" width="20" height="1" fill="#c2dcf2"/><rect x="17.0" y="792.30" width="20" height="1" fill="#c2dcf2"/><rect x="17.0" y="794.95" width="20" height="1" fill="#c2dcf2"/><rect x="17.0" y="797.60" width="20" height="1" fill="#c2dcf2"/><rect x="17.0" y="800.25" width="20" height="1" fill="#c2dcf2"/><rect x="37.0" y="851.0" width="22" height="22" fill="#74abdf"/><rect x="38.0" y="852.20" width="20" height="1" fill="#c2dcf2"/><rect x="38.0" y="854.85" width="20" height="1" fill="#c2dcf2"/><rect x="38.0" y="857.50" width="20" height="1" fill="#c2dcf2"/><rect x="38.0" y="860.15" width="20" height="1" fill="#c2dcf2"/><rect x="38.0" y="862.80" width="20" height="1" fill="#c2dcf2"/><rect x="38.0" y="865.45" width="20" height="1" fill="#c2dcf2"/><rect x="38.0" y="868.10" width="20" height="1" fill="#c2dcf2"/><rect x="38.0" y="870.75" width="20" height="1" fill="#c2dcf2"/><rect x="62.0" y="780.5" width="22" height="22" fill="#74abdf"/><rect x="63.0" y="781.70" width="20" height="1" fill="#c2dcf2"/><rect x="63.0" y="784.35" width="20" height="1" fill="#c2dcf2"/><rect x="63.0" y="787.00" width="20" height="1" fill="#c2dcf2"/><rect x="63.0" y="789.65" width="20" height="1" fill="#c2dcf2"/><rect x="63.0" y="792.30" width="20" height="1" fill="#c2dcf2"/><rect x="63.0" y="794.95" width="20" height="1" fill="#c2dcf2"/><rect x="63.0" y="797.60" width="20" height="1" fill="#c2dcf2"/><rect x="63.0" y="800.25" width="20" height="1" fill="#c2dcf2"/><rect x="83.0" y="851.0" width="22" height="22" fill="#74abdf"/><rect x="84.0" y="852.20" width="20" height="1" fill="#c2dcf2"/><rect x="84.0" y="854.85" width="20" height="1" fill="#c2dcf2"/><rect x="84.0" y="857.50" width="20" height="1" fill="#c2dcf2"/><rect x="84.0" y="860.15" width="20" height="1" fill="#c2dcf2"/><rect x="84.0" y="862.80" width="20" height="1" fill="#c2dcf2"/><rect x="84.0" y="865.45" width="20" height="1" fill="#c2dcf2"/><rect x="84.0" y="868.10" width="20" height="1" fill="#c2dcf2"/><rect x="84.0" y="870.75" width="20" height="1" fill="#c2dcf2"/><rect x="99.0" y="780.5" width="22" height="22" fill="#74abdf"/><rect x="100.0" y="781.70" width="20" height="1" fill="#c2dcf2"/><rect x="100.0" y="784.35" width="20" height="1" fill="#c2dcf2"/><rect x="100.0" y="787.00" width="20" height="1" fill="#c2dcf2"/><rect x="100.0" y="789.65" width="20" height="1" fill="#c2dcf2"/><rect x="100.0" y="792.30" width="20" height="1" fill="#c2dcf2"/><rect x="100.0" y="794.95" width="20" height="1" fill="#c2dcf2"/><rect x="100.0" y="797.60" width="20" height="1" fill="#c2dcf2"/><rect x="100.0" y="800.25" width="20" height="1" fill="#c2dcf2"/><rect x="120.0" y="851.0" width="22" height="22" fill="#74abdf"/><rect x="121.0" y="852.20" width="20" height="1" fill="#c2dcf2"/><rect x="121.0" y="854.85" width="20" height="1" fill="#c2dcf2"/><rect x="121.0" y="857.50" width="20" height="1" fill="#c2dcf2"/><rect x="121.0" y="860.15" width="20" height="1" fill="#c2dcf2"/><rect x="121.0" y="862.80" width="20" height="1" fill="#c2dcf2"/><rect x="121.0" y="865.45" width="20" height="1" fill="#c2dcf2"/><rect x="121.0" y="868.10" width="20" height="1" fill="#c2dcf2"/><rect x="121.0" y="870.75" width="20" height="1" fill="#c2dcf2"/><rect x="136.0" y="780.5" width="22" height="22" fill="#74abdf"/><rect x="137.0" y="781.70" width="20" height="1" fill="#c2dcf2"/><rect x="137.0" y="784.35" width="20" height="1" fill="#c2dcf2"/><rect x="137.0" y="787.00" width="20" height="1" fill="#c2dcf2"/><rect x="137.0" y="789.65" width="20" height="1" fill="#c2dcf2"/><rect x="137.0" y="792.30" width="20" height="1" fill="#c2dcf2"/><rect x="137.0" y="794.95" width="20" height="1" fill="#c2dcf2"/><rect x="137.0" y="797.60" width="20" height="1" fill="#c2dcf2"/><rect x="137.0" y="800.25" width="20" height="1" fill="#c2dcf2"/><rect x="157.0" y="851.0" width="22" height="22" fill="#74abdf"/><rect x="158.0" y="852.20" width="20" height="1" fill="#c2dcf2"/><rect x="158.0" y="854.85" width="20" height="1" fill="#c2dcf2"/><rect x="158.0" y="857.50" width="20" height="1" fill="#c2dcf2"/><rect x="158.0" y="860.15" width="20" height="1" fill="#c2dcf2"/><rect x="158.0" y="862.80" width="20" height="1" fill="#c2dcf2"/><rect x="158.0" y="865.45" width="20" height="1" fill="#c2dcf2"/><rect x="158.0" y="868.10" width="20" height="1" fill="#c2dcf2"/><rect x="158.0" y="870.75" width="20" height="1" fill="#c2dcf2"/><rect x="172.0" y="780.5" width="22" height="22" fill="#74abdf"/><rect x="173.0" y="781.70" width="20" height="1" fill="#c2dcf2"/><rect x="173.0" y="784.35" width="20" height="1" fill="#c2dcf2"/><rect x="173.0" y="787.00" width="20" height="1" fill="#c2dcf2"/><rect x="173.0" y="789.65" width="20" height="1" fill="#c2dcf2"/><rect x="173.0" y="792.30" width="20" height="1" fill="#c2dcf2"/><rect x="173.0" y="794.95" width="20" height="1" fill="#c2dcf2"/><rect x="173.0" y="797.60" width="20" height="1" fill="#c2dcf2"/><rect x="173.0" y="800.25" width="20" height="1" fill="#c2dcf2"/><rect x="193.0" y="851.0" width="22" height="22" fill="#74abdf"/><rect x="194.0" y="852.20" width="20" height="1" fill="#c2dcf2"/><rect x="194.0" y="854.85" width="20" height="1" fill="#c2dcf2"/><rect x="194.0" y="857.50" width="20" height="1" fill="#c2dcf2"/><rect x="194.0" y="860.15" width="20" height="1" fill="#c2dcf2"/><rect x="194.0" y="862.80" width="20" height="1" fill="#c2dcf2"/><rect x="194.0" y="865.45" width="20" height="1" fill="#c2dcf2"/><rect x="194.0" y="868.10" width="20" height="1" fill="#c2dcf2"/><rect x="194.0" y="870.75" width="20" height="1" fill="#c2dcf2"/><rect x="219.0" y="780.5" width="22" height="22" fill="#74abdf"/><rect x="220.0" y="781.70" width="20" height="1" fill="#c2dcf2"/><rect x="220.0" y="784.35" width="20" height="1" fill="#c2dcf2"/><rect x="220.0" y="787.00" width="20" height="1" fill="#c2dcf2"/><rect x="220.0" y="789.65" width="20" height="1" fill="#c2dcf2"/><rect x="220.0" y="792.30" width="20" height="1" fill="#c2dcf2"/><rect x="220.0" y="794.95" width="20" height="1" fill="#c2dcf2"/><rect x="220.0" y="797.60" width="20" height="1" fill="#c2dcf2"/><rect x="220.0" y="800.25" width="20" height="1" fill="#c2dcf2"/><rect x="240.0" y="851.0" width="22" height="22" fill="#74abdf"/><rect x="241.0" y="852.20" width="20" height="1" fill="#c2dcf2"/><rect x="241.0" y="854.85" width="20" height="1" fill="#c2dcf2"/><rect x="241.0" y="857.50" width="20" height="1" fill="#c2dcf2"/><rect x="241.0" y="860.15" width="20" height="1" fill="#c2dcf2"/><rect x="241.0" y="862.80" width="20" height="1" fill="#c2dcf2"/><rect x="241.0" y="865.45" width="20" height="1" fill="#c2dcf2"/><rect x="241.0" y="868.10" width="20" height="1" fill="#c2dcf2"/><rect x="241.0" y="870.75" width="20" height="1" fill="#c2dcf2"/><rect x="257.0" y="780.5" width="22" height="22" fill="#74abdf"/><rect x="258.0" y="781.70" width="20" height="1" fill="#c2dcf2"/><rect x="258.0" y="784.35" width="20" height="1" fill="#c2dcf2"/><rect x="258.0" y="787.00" width="20" height="1" fill="#c2dcf2"/><rect x="258.0" y="789.65" width="20" height="1" fill="#c2dcf2"/><rect x="258.0" y="792.30" width="20" height="1" fill="#c2dcf2"/><rect x="258.0" y="794.95" width="20" height="1" fill="#c2dcf2"/><rect x="258.0" y="797.60" width="20" height="1" fill="#c2dcf2"/><rect x="258.0" y="800.25" width="20" height="1" fill="#c2dcf2"/><rect x="278.0" y="851.0" width="22" height="22" fill="#74abdf"/><rect x="279.0" y="852.20" width="20" height="1" fill="#c2dcf2"/><rect x="279.0" y="854.85" width="20" height="1" fill="#c2dcf2"/><rect x="279.0" y="857.50" width="20" height="1" fill="#c2dcf2"/><rect x="279.0" y="860.15" width="20" height="1" fill="#c2dcf2"/><rect x="279.0" y="862.80" width="20" height="1" fill="#c2dcf2"/><rect x="279.0" y="865.45" width="20" height="1" fill="#c2dcf2"/><rect x="279.0" y="868.10" width="20" height="1" fill="#c2dcf2"/><rect x="279.0" y="870.75" width="20" height="1" fill="#c2dcf2"/><rect x="293.5" y="780.5" width="22" height="22" fill="#74abdf"/><rect x="294.5" y="781.70" width="20" height="1" fill="#c2dcf2"/><rect x="294.5" y="784.35" width="20" height="1" fill="#c2dcf2"/><rect x="294.5" y="787.00" width="20" height="1" fill="#c2dcf2"/><rect x="294.5" y="789.65" width="20" height="1" fill="#c2dcf2"/><rect x="294.5" y="792.30" width="20" height="1" fill="#c2dcf2"/><rect x="294.5" y="794.95" width="20" height="1" fill="#c2dcf2"/><rect x="294.5" y="797.60" width="20" height="1" fill="#c2dcf2"/><rect x="294.5" y="800.25" width="20" height="1" fill="#c2dcf2"/><rect x="314.5" y="851.0" width="22" height="22" fill="#74abdf"/><rect x="315.5" y="852.20" width="20" height="1" fill="#c2dcf2"/><rect x="315.5" y="854.85" width="20" height="1" fill="#c2dcf2"/><rect x="315.5" y="857.50" width="20" height="1" fill="#c2dcf2"/><rect x="315.5" y="860.15" width="20" height="1" fill="#c2dcf2"/><rect x="315.5" y="862.80" width="20" height="1" fill="#c2dcf2"/><rect x="315.5" y="865.45" width="20" height="1" fill="#c2dcf2"/><rect x="315.5" y="868.10" width="20" height="1" fill="#c2dcf2"/><rect x="315.5" y="870.75" width="20" height="1" fill="#c2dcf2"/><rect x="330.0" y="780.5" width="22" height="22" fill="#74abdf"/><rect x="331.0" y="781.70" width="20" height="1" fill="#c2dcf2"/><rect x="331.0" y="784.35" width="20" height="1" fill="#c2dcf2"/><rect x="331.0" y="787.00" width="20" height="1" fill="#c2dcf2"/><rect x="331.0" y="789.65" width="20" height="1" fill="#c2dcf2"/><rect x="331.0" y="792.30" width="20" height="1" fill="#c2dcf2"/><rect x="331.0" y="794.95" width="20" height="1" fill="#c2dcf2"/><rect x="331.0" y="797.60" width="20" height="1" fill="#c2dcf2"/><rect x="331.0" y="800.25" width="20" height="1" fill="#c2dcf2"/><rect x="351.0" y="851.0" width="22" height="22" fill="#74abdf"/><rect x="352.0" y="852.20" width="20" height="1" fill="#c2dcf2"/><rect x="352.0" y="854.85" width="20" height="1" fill="#c2dcf2"/><rect x="352.0" y="857.50" width="20" height="1" fill="#c2dcf2"/><rect x="352.0" y="860.15" width="20" height="1" fill="#c2dcf2"/><rect x="352.0" y="862.80" width="20" height="1" fill="#c2dcf2"/><rect x="352.0" y="865.45" width="20" height="1" fill="#c2dcf2"/><rect x="352.0" y="868.10" width="20" height="1" fill="#c2dcf2"/><rect x="352.0" y="870.75" width="20" height="1" fill="#c2dcf2"/><rect x="381.0" y="780.5" width="22" height="22" fill="#74abdf"/><rect x="382.0" y="781.70" width="20" height="1" fill="#c2dcf2"/><rect x="382.0" y="784.35" width="20" height="1" fill="#c2dcf2"/><rect x="382.0" y="787.00" width="20" height="1" fill="#c2dcf2"/><rect x="382.0" y="789.65" width="20" height="1" fill="#c2dcf2"/><rect x="382.0" y="792.30" width="20" height="1" fill="#c2dcf2"/><rect x="382.0" y="794.95" width="20" height="1" fill="#c2dcf2"/><rect x="382.0" y="797.60" width="20" height="1" fill="#c2dcf2"/><rect x="382.0" y="800.25" width="20" height="1" fill="#c2dcf2"/><rect x="402.0" y="851.0" width="22" height="22" fill="#74abdf"/><rect x="403.0" y="852.20" width="20" height="1" fill="#c2dcf2"/><rect x="403.0" y="854.85" width="20" height="1" fill="#c2dcf2"/><rect x="403.0" y="857.50" width="20" height="1" fill="#c2dcf2"/><rect x="403.0" y="860.15" width="20" height="1" fill="#c2dcf2"/><rect x="403.0" y="862.80" width="20" height="1" fill="#c2dcf2"/><rect x="403.0" y="865.45" width="20" height="1" fill="#c2dcf2"/><rect x="403.0" y="868.10" width="20" height="1" fill="#c2dcf2"/><rect x="403.0" y="870.75" width="20" height="1" fill="#c2dcf2"/><rect x="417.0" y="780.5" width="22" height="22" fill="#74abdf"/><rect x="418.0" y="781.70" width="20" height="1" fill="#c2dcf2"/><rect x="418.0" y="784.35" width="20" height="1" fill="#c2dcf2"/><rect x="418.0" y="787.00" width="20" height="1" fill="#c2dcf2"/><rect x="418.0" y="789.65" width="20" height="1" fill="#c2dcf2"/><rect x="418.0" y="792.30" width="20" height="1" fill="#c2dcf2"/><rect x="418.0" y="794.95" width="20" height="1" fill="#c2dcf2"/><rect x="418.0" y="797.60" width="20" height="1" fill="#c2dcf2"/><rect x="418.0" y="800.25" width="20" height="1" fill="#c2dcf2"/><rect x="438.0" y="851.0" width="22" height="22" fill="#74abdf"/><rect x="439.0" y="852.20" width="20" height="1" fill="#c2dcf2"/><rect x="439.0" y="854.85" width="20" height="1" fill="#c2dcf2"/><rect x="439.0" y="857.50" width="20" height="1" fill="#c2dcf2"/><rect x="439.0" y="860.15" width="20" height="1" fill="#c2dcf2"/><rect x="439.0" y="862.80" width="20" height="1" fill="#c2dcf2"/><rect x="439.0" y="865.45" width="20" height="1" fill="#c2dcf2"/><rect x="439.0" y="868.10" width="20" height="1" fill="#c2dcf2"/><rect x="439.0" y="870.75" width="20" height="1" fill="#c2dcf2"/><rect x="454.0" y="780.5" width="22" height="22" fill="#74abdf"/><rect x="455.0" y="781.70" width="20" height="1" fill="#c2dcf2"/><rect x="455.0" y="784.35" width="20" height="1" fill="#c2dcf2"/><rect x="455.0" y="787.00" width="20" height="1" fill="#c2dcf2"/><rect x="455.0" y="789.65" width="20" height="1" fill="#c2dcf2"/><rect x="455.0" y="792.30" width="20" height="1" fill="#c2dcf2"/><rect x="455.0" y="794.95" width="20" height="1" fill="#c2dcf2"/><rect x="455.0" y="797.60" width="20" height="1" fill="#c2dcf2"/><rect x="455.0" y="800.25" width="20" height="1" fill="#c2dcf2"/><rect x="475.0" y="851.0" width="22" height="22" fill="#74abdf"/><rect x="476.0" y="852.20" width="20" height="1" fill="#c2dcf2"/><rect x="476.0" y="854.85" width="20" height="1" fill="#c2dcf2"/><rect x="476.0" y="857.50" width="20" height="1" fill="#c2dcf2"/><rect x="476.0" y="860.15" width="20" height="1" fill="#c2dcf2"/><rect x="476.0" y="862.80" width="20" height="1" fill="#c2dcf2"/><rect x="476.0" y="865.45" width="20" height="1" fill="#c2dcf2"/><rect x="476.0" y="868.10" width="20" height="1" fill="#c2dcf2"/><rect x="476.0" y="870.75" width="20" height="1" fill="#c2dcf2"/><rect x="490.0" y="780.5" width="22" height="22" fill="#74abdf"/><rect x="491.0" y="781.70" width="20" height="1" fill="#c2dcf2"/><rect x="491.0" y="784.35" width="20" height="1" fill="#c2dcf2"/><rect x="491.0" y="787.00" width="20" height="1" fill="#c2dcf2"/><rect x="491.0" y="789.65" width="20" height="1" fill="#c2dcf2"/><rect x="491.0" y="792.30" width="20" height="1" fill="#c2dcf2"/><rect x="491.0" y="794.95" width="20" height="1" fill="#c2dcf2"/><rect x="491.0" y="797.60" width="20" height="1" fill="#c2dcf2"/><rect x="491.0" y="800.25" width="20" height="1" fill="#c2dcf2"/><rect x="511.0" y="851.0" width="22" height="22" fill="#74abdf"/><rect x="512.0" y="852.20" width="20" height="1" fill="#c2dcf2"/><rect x="512.0" y="854.85" width="20" height="1" fill="#c2dcf2"/><rect x="512.0" y="857.50" width="20" height="1" fill="#c2dcf2"/><rect x="512.0" y="860.15" width="20" height="1" fill="#c2dcf2"/><rect x="512.0" y="862.80" width="20" height="1" fill="#c2dcf2"/><rect x="512.0" y="865.45" width="20" height="1" fill="#c2dcf2"/><rect x="512.0" y="868.10" width="20" height="1" fill="#c2dcf2"/><rect x="512.0" y="870.75" width="20" height="1" fill="#c2dcf2"/><rect x="537.0" y="780.5" width="22" height="22" fill="#74abdf"/><rect x="538.0" y="781.70" width="20" height="1" fill="#c2dcf2"/><rect x="538.0" y="784.35" width="20" height="1" fill="#c2dcf2"/><rect x="538.0" y="787.00" width="20" height="1" fill="#c2dcf2"/><rect x="538.0" y="789.65" width="20" height="1" fill="#c2dcf2"/><rect x="538.0" y="792.30" width="20" height="1" fill="#c2dcf2"/><rect x="538.0" y="794.95" width="20" height="1" fill="#c2dcf2"/><rect x="538.0" y="797.60" width="20" height="1" fill="#c2dcf2"/><rect x="538.0" y="800.25" width="20" height="1" fill="#c2dcf2"/><rect x="558.0" y="851.0" width="22" height="22" fill="#74abdf"/><rect x="559.0" y="852.20" width="20" height="1" fill="#c2dcf2"/><rect x="559.0" y="854.85" width="20" height="1" fill="#c2dcf2"/><rect x="559.0" y="857.50" width="20" height="1" fill="#c2dcf2"/><rect x="559.0" y="860.15" width="20" height="1" fill="#c2dcf2"/><rect x="559.0" y="862.80" width="20" height="1" fill="#c2dcf2"/><rect x="559.0" y="865.45" width="20" height="1" fill="#c2dcf2"/><rect x="559.0" y="868.10" width="20" height="1" fill="#c2dcf2"/><rect x="559.0" y="870.75" width="20" height="1" fill="#c2dcf2"/><rect x="573.0" y="780.5" width="22" height="22" fill="#74abdf"/><rect x="574.0" y="781.70" width="20" height="1" fill="#c2dcf2"/><rect x="574.0" y="784.35" width="20" height="1" fill="#c2dcf2"/><rect x="574.0" y="787.00" width="20" height="1" fill="#c2dcf2"/><rect x="574.0" y="789.65" width="20" height="1" fill="#c2dcf2"/><rect x="574.0" y="792.30" width="20" height="1" fill="#c2dcf2"/><rect x="574.0" y="794.95" width="20" height="1" fill="#c2dcf2"/><rect x="574.0" y="797.60" width="20" height="1" fill="#c2dcf2"/><rect x="574.0" y="800.25" width="20" height="1" fill="#c2dcf2"/><rect x="594.0" y="851.0" width="22" height="22" fill="#74abdf"/><rect x="595.0" y="852.20" width="20" height="1" fill="#c2dcf2"/><rect x="595.0" y="854.85" width="20" height="1" fill="#c2dcf2"/><rect x="595.0" y="857.50" width="20" height="1" fill="#c2dcf2"/><rect x="595.0" y="860.15" width="20" height="1" fill="#c2dcf2"/><rect x="595.0" y="862.80" width="20" height="1" fill="#c2dcf2"/><rect x="595.0" y="865.45" width="20" height="1" fill="#c2dcf2"/><rect x="595.0" y="868.10" width="20" height="1" fill="#c2dcf2"/><rect x="595.0" y="870.75" width="20" height="1" fill="#c2dcf2"/><rect x="609.0" y="780.5" width="22" height="22" fill="#74abdf"/><rect x="610.0" y="781.70" width="20" height="1" fill="#c2dcf2"/><rect x="610.0" y="784.35" width="20" height="1" fill="#c2dcf2"/><rect x="610.0" y="787.00" width="20" height="1" fill="#c2dcf2"/><rect x="610.0" y="789.65" width="20" height="1" fill="#c2dcf2"/><rect x="610.0" y="792.30" width="20" height="1" fill="#c2dcf2"/><rect x="610.0" y="794.95" width="20" height="1" fill="#c2dcf2"/><rect x="610.0" y="797.60" width="20" height="1" fill="#c2dcf2"/><rect x="610.0" y="800.25" width="20" height="1" fill="#c2dcf2"/><rect x="630.0" y="851.0" width="22" height="22" fill="#74abdf"/><rect x="631.0" y="852.20" width="20" height="1" fill="#c2dcf2"/><rect x="631.0" y="854.85" width="20" height="1" fill="#c2dcf2"/><rect x="631.0" y="857.50" width="20" height="1" fill="#c2dcf2"/><rect x="631.0" y="860.15" width="20" height="1" fill="#c2dcf2"/><rect x="631.0" y="862.80" width="20" height="1" fill="#c2dcf2"/><rect x="631.0" y="865.45" width="20" height="1" fill="#c2dcf2"/><rect x="631.0" y="868.10" width="20" height="1" fill="#c2dcf2"/><rect x="631.0" y="870.75" width="20" height="1" fill="#c2dcf2"/><rect x="646.0" y="780.5" width="22" height="22" fill="#74abdf"/><rect x="647.0" y="781.70" width="20" height="1" fill="#c2dcf2"/><rect x="647.0" y="784.35" width="20" height="1" fill="#c2dcf2"/><rect x="647.0" y="787.00" width="20" height="1" fill="#c2dcf2"/><rect x="647.0" y="789.65" width="20" height="1" fill="#c2dcf2"/><rect x="647.0" y="792.30" width="20" height="1" fill="#c2dcf2"/><rect x="647.0" y="794.95" width="20" height="1" fill="#c2dcf2"/><rect x="647.0" y="797.60" width="20" height="1" fill="#c2dcf2"/><rect x="647.0" y="800.25" width="20" height="1" fill="#c2dcf2"/><rect x="667.0" y="851.0" width="22" height="22" fill="#74abdf"/><rect x="668.0" y="852.20" width="20" height="1" fill="#c2dcf2"/><rect x="668.0" y="854.85" width="20" height="1" fill="#c2dcf2"/><rect x="668.0" y="857.50" width="20" height="1" fill="#c2dcf2"/><rect x="668.0" y="860.15" width="20" height="1" fill="#c2dcf2"/><rect x="668.0" y="862.80" width="20" height="1" fill="#c2dcf2"/><rect x="668.0" y="865.45" width="20" height="1" fill="#c2dcf2"/><rect x="668.0" y="868.10" width="20" height="1" fill="#c2dcf2"/><rect x="668.0" y="870.75" width="20" height="1" fill="#c2dcf2"/><rect x="690.0" y="780.5" width="22" height="22" fill="#74abdf"/><rect x="691.0" y="781.70" width="20" height="1" fill="#c2dcf2"/><rect x="691.0" y="784.35" width="20" height="1" fill="#c2dcf2"/><rect x="691.0" y="787.00" width="20" height="1" fill="#c2dcf2"/><rect x="691.0" y="789.65" width="20" height="1" fill="#c2dcf2"/><rect x="691.0" y="792.30" width="20" height="1" fill="#c2dcf2"/><rect x="691.0" y="794.95" width="20" height="1" fill="#c2dcf2"/><rect x="691.0" y="797.60" width="20" height="1" fill="#c2dcf2"/><rect x="691.0" y="800.25" width="20" height="1" fill="#c2dcf2"/><rect x="711.0" y="851.0" width="22" height="22" fill="#74abdf"/><rect x="712.0" y="852.20" width="20" height="1" fill="#c2dcf2"/><rect x="712.0" y="854.85" width="20" height="1" fill="#c2dcf2"/><rect x="712.0" y="857.50" width="20" height="1" fill="#c2dcf2"/><rect x="712.0" y="860.15" width="20" height="1" fill="#c2dcf2"/><rect x="712.0" y="862.80" width="20" height="1" fill="#c2dcf2"/><rect x="712.0" y="865.45" width="20" height="1" fill="#c2dcf2"/><rect x="712.0" y="868.10" width="20" height="1" fill="#c2dcf2"/><rect x="712.0" y="870.75" width="20" height="1" fill="#c2dcf2"/><rect x="726.0" y="780.5" width="22" height="22" fill="#74abdf"/><rect x="727.0" y="781.70" width="20" height="1" fill="#c2dcf2"/><rect x="727.0" y="784.35" width="20" height="1" fill="#c2dcf2"/><rect x="727.0" y="787.00" width="20" height="1" fill="#c2dcf2"/><rect x="727.0" y="789.65" width="20" height="1" fill="#c2dcf2"/><rect x="727.0" y="792.30" width="20" height="1" fill="#c2dcf2"/><rect x="727.0" y="794.95" width="20" height="1" fill="#c2dcf2"/><rect x="727.0" y="797.60" width="20" height="1" fill="#c2dcf2"/><rect x="727.0" y="800.25" width="20" height="1" fill="#c2dcf2"/><rect x="747.0" y="851.0" width="22" height="22" fill="#74abdf"/><rect x="748.0" y="852.20" width="20" height="1" fill="#c2dcf2"/><rect x="748.0" y="854.85" width="20" height="1" fill="#c2dcf2"/><rect x="748.0" y="857.50" width="20" height="1" fill="#c2dcf2"/><rect x="748.0" y="860.15" width="20" height="1" fill="#c2dcf2"/><rect x="748.0" y="862.80" width="20" height="1" fill="#c2dcf2"/><rect x="748.0" y="865.45" width="20" height="1" fill="#c2dcf2"/><rect x="748.0" y="868.10" width="20" height="1" fill="#c2dcf2"/><rect x="748.0" y="870.75" width="20" height="1" fill="#c2dcf2"/><rect x="763.0" y="780.5" width="22" height="22" fill="#74abdf"/><rect x="764.0" y="781.70" width="20" height="1" fill="#c2dcf2"/><rect x="764.0" y="784.35" width="20" height="1" fill="#c2dcf2"/><rect x="764.0" y="787.00" width="20" height="1" fill="#c2dcf2"/><rect x="764.0" y="789.65" width="20" height="1" fill="#c2dcf2"/><rect x="764.0" y="792.30" width="20" height="1" fill="#c2dcf2"/><rect x="764.0" y="794.95" width="20" height="1" fill="#c2dcf2"/><rect x="764.0" y="797.60" width="20" height="1" fill="#c2dcf2"/><rect x="764.0" y="800.25" width="20" height="1" fill="#c2dcf2"/><rect x="784.0" y="851.0" width="22" height="22" fill="#74abdf"/><rect x="785.0" y="852.20" width="20" height="1" fill="#c2dcf2"/><rect x="785.0" y="854.85" width="20" height="1" fill="#c2dcf2"/><rect x="785.0" y="857.50" width="20" height="1" fill="#c2dcf2"/><rect x="785.0" y="860.15" width="20" height="1" fill="#c2dcf2"/><rect x="785.0" y="862.80" width="20" height="1" fill="#c2dcf2"/><rect x="785.0" y="865.45" width="20" height="1" fill="#c2dcf2"/><rect x="785.0" y="868.10" width="20" height="1" fill="#c2dcf2"/><rect x="785.0" y="870.75" width="20" height="1" fill="#c2dcf2"/><rect x="799.0" y="780.5" width="22" height="22" fill="#74abdf"/><rect x="800.0" y="781.70" width="20" height="1" fill="#c2dcf2"/><rect x="800.0" y="784.35" width="20" height="1" fill="#c2dcf2"/><rect x="800.0" y="787.00" width="20" height="1" fill="#c2dcf2"/><rect x="800.0" y="789.65" width="20" height="1" fill="#c2dcf2"/><rect x="800.0" y="792.30" width="20" height="1" fill="#c2dcf2"/><rect x="800.0" y="794.95" width="20" height="1" fill="#c2dcf2"/><rect x="800.0" y="797.60" width="20" height="1" fill="#c2dcf2"/><rect x="800.0" y="800.25" width="20" height="1" fill="#c2dcf2"/><rect x="820.0" y="851.0" width="22" height="22" fill="#74abdf"/><rect x="821.0" y="852.20" width="20" height="1" fill="#c2dcf2"/><rect x="821.0" y="854.85" width="20" height="1" fill="#c2dcf2"/><rect x="821.0" y="857.50" width="20" height="1" fill="#c2dcf2"/><rect x="821.0" y="860.15" width="20" height="1" fill="#c2dcf2"/><rect x="821.0" y="862.80" width="20" height="1" fill="#c2dcf2"/><rect x="821.0" y="865.45" width="20" height="1" fill="#c2dcf2"/><rect x="821.0" y="868.10" width="20" height="1" fill="#c2dcf2"/><rect x="821.0" y="870.75" width="20" height="1" fill="#c2dcf2"/><rect x="1168.0" y="780.5" width="22" height="22" fill="#74abdf"/><rect x="1169.0" y="781.70" width="20" height="1" fill="#c2dcf2"/><rect x="1169.0" y="784.35" width="20" height="1" fill="#c2dcf2"/><rect x="1169.0" y="787.00" width="20" height="1" fill="#c2dcf2"/><rect x="1169.0" y="789.65" width="20" height="1" fill="#c2dcf2"/><rect x="1169.0" y="792.30" width="20" height="1" fill="#c2dcf2"/><rect x="1169.0" y="794.95" width="20" height="1" fill="#c2dcf2"/><rect x="1169.0" y="797.60" width="20" height="1" fill="#c2dcf2"/><rect x="1169.0" y="800.25" width="20" height="1" fill="#c2dcf2"/><rect x="1189.0" y="851.0" width="22" height="22" fill="#74abdf"/><rect x="1190.0" y="852.20" width="20" height="1" fill="#c2dcf2"/><rect x="1190.0" y="854.85" width="20" height="1" fill="#c2dcf2"/><rect x="1190.0" y="857.50" width="20" height="1" fill="#c2dcf2"/><rect x="1190.0" y="860.15" width="20" height="1" fill="#c2dcf2"/><rect x="1190.0" y="862.80" width="20" height="1" fill="#c2dcf2"/><rect x="1190.0" y="865.45" width="20" height="1" fill="#c2dcf2"/><rect x="1190.0" y="868.10" width="20" height="1" fill="#c2dcf2"/><rect x="1190.0" y="870.75" width="20" height="1" fill="#c2dcf2"/><rect x="1205.0" y="780.5" width="22" height="22" fill="#74abdf"/><rect x="1206.0" y="781.70" width="20" height="1" fill="#c2dcf2"/><rect x="1206.0" y="784.35" width="20" height="1" fill="#c2dcf2"/><rect x="1206.0" y="787.00" width="20" height="1" fill="#c2dcf2"/><rect x="1206.0" y="789.65" width="20" height="1" fill="#c2dcf2"/><rect x="1206.0" y="792.30" width="20" height="1" fill="#c2dcf2"/><rect x="1206.0" y="794.95" width="20" height="1" fill="#c2dcf2"/><rect x="1206.0" y="797.60" width="20" height="1" fill="#c2dcf2"/><rect x="1206.0" y="800.25" width="20" height="1" fill="#c2dcf2"/><rect x="1226.0" y="851.0" width="22" height="22" fill="#74abdf"/><rect x="1227.0" y="852.20" width="20" height="1" fill="#c2dcf2"/><rect x="1227.0" y="854.85" width="20" height="1" fill="#c2dcf2"/><rect x="1227.0" y="857.50" width="20" height="1" fill="#c2dcf2"/><rect x="1227.0" y="860.15" width="20" height="1" fill="#c2dcf2"/><rect x="1227.0" y="862.80" width="20" height="1" fill="#c2dcf2"/><rect x="1227.0" y="865.45" width="20" height="1" fill="#c2dcf2"/><rect x="1227.0" y="868.10" width="20" height="1" fill="#c2dcf2"/><rect x="1227.0" y="870.75" width="20" height="1" fill="#c2dcf2"/><rect x="1241.6" y="780.5" width="22" height="22" fill="#74abdf"/><rect x="1242.6" y="781.70" width="20" height="1" fill="#c2dcf2"/><rect x="1242.6" y="784.35" width="20" height="1" fill="#c2dcf2"/><rect x="1242.6" y="787.00" width="20" height="1" fill="#c2dcf2"/><rect x="1242.6" y="789.65" width="20" height="1" fill="#c2dcf2"/><rect x="1242.6" y="792.30" width="20" height="1" fill="#c2dcf2"/><rect x="1242.6" y="794.95" width="20" height="1" fill="#c2dcf2"/><rect x="1242.6" y="797.60" width="20" height="1" fill="#c2dcf2"/><rect x="1242.6" y="800.25" width="20" height="1" fill="#c2dcf2"/><rect x="1262.6" y="851.0" width="22" height="22" fill="#74abdf"/><rect x="1263.6" y="852.20" width="20" height="1" fill="#c2dcf2"/><rect x="1263.6" y="854.85" width="20" height="1" fill="#c2dcf2"/><rect x="1263.6" y="857.50" width="20" height="1" fill="#c2dcf2"/><rect x="1263.6" y="860.15" width="20" height="1" fill="#c2dcf2"/><rect x="1263.6" y="862.80" width="20" height="1" fill="#c2dcf2"/><rect x="1263.6" y="865.45" width="20" height="1" fill="#c2dcf2"/><rect x="1263.6" y="868.10" width="20" height="1" fill="#c2dcf2"/><rect x="1263.6" y="870.75" width="20" height="1" fill="#c2dcf2"/><rect x="1278.0" y="780.5" width="22" height="22" fill="#74abdf"/><rect x="1279.0" y="781.70" width="20" height="1" fill="#c2dcf2"/><rect x="1279.0" y="784.35" width="20" height="1" fill="#c2dcf2"/><rect x="1279.0" y="787.00" width="20" height="1" fill="#c2dcf2"/><rect x="1279.0" y="789.65" width="20" height="1" fill="#c2dcf2"/><rect x="1279.0" y="792.30" width="20" height="1" fill="#c2dcf2"/><rect x="1279.0" y="794.95" width="20" height="1" fill="#c2dcf2"/><rect x="1279.0" y="797.60" width="20" height="1" fill="#c2dcf2"/><rect x="1279.0" y="800.25" width="20" height="1" fill="#c2dcf2"/><rect x="1299.0" y="851.0" width="22" height="22" fill="#74abdf"/><rect x="1300.0" y="852.20" width="20" height="1" fill="#c2dcf2"/><rect x="1300.0" y="854.85" width="20" height="1" fill="#c2dcf2"/><rect x="1300.0" y="857.50" width="20" height="1" fill="#c2dcf2"/><rect x="1300.0" y="860.15" width="20" height="1" fill="#c2dcf2"/><rect x="1300.0" y="862.80" width="20" height="1" fill="#c2dcf2"/><rect x="1300.0" y="865.45" width="20" height="1" fill="#c2dcf2"/><rect x="1300.0" y="868.10" width="20" height="1" fill="#c2dcf2"/><rect x="1300.0" y="870.75" width="20" height="1" fill="#c2dcf2"/><rect x="1326.3" y="780.5" width="22" height="22" fill="#74abdf"/><rect x="1327.3" y="781.70" width="20" height="1" fill="#c2dcf2"/><rect x="1327.3" y="784.35" width="20" height="1" fill="#c2dcf2"/><rect x="1327.3" y="787.00" width="20" height="1" fill="#c2dcf2"/><rect x="1327.3" y="789.65" width="20" height="1" fill="#c2dcf2"/><rect x="1327.3" y="792.30" width="20" height="1" fill="#c2dcf2"/><rect x="1327.3" y="794.95" width="20" height="1" fill="#c2dcf2"/><rect x="1327.3" y="797.60" width="20" height="1" fill="#c2dcf2"/><rect x="1327.3" y="800.25" width="20" height="1" fill="#c2dcf2"/><rect x="1347.3" y="851.0" width="22" height="22" fill="#74abdf"/><rect x="1348.3" y="852.20" width="20" height="1" fill="#c2dcf2"/><rect x="1348.3" y="854.85" width="20" height="1" fill="#c2dcf2"/><rect x="1348.3" y="857.50" width="20" height="1" fill="#c2dcf2"/><rect x="1348.3" y="860.15" width="20" height="1" fill="#c2dcf2"/><rect x="1348.3" y="862.80" width="20" height="1" fill="#c2dcf2"/><rect x="1348.3" y="865.45" width="20" height="1" fill="#c2dcf2"/><rect x="1348.3" y="868.10" width="20" height="1" fill="#c2dcf2"/><rect x="1348.3" y="870.75" width="20" height="1" fill="#c2dcf2"/><rect x="1363.5" y="780.5" width="22" height="22" fill="#74abdf"/><rect x="1364.5" y="781.70" width="20" height="1" fill="#c2dcf2"/><rect x="1364.5" y="784.35" width="20" height="1" fill="#c2dcf2"/><rect x="1364.5" y="787.00" width="20" height="1" fill="#c2dcf2"/><rect x="1364.5" y="789.65" width="20" height="1" fill="#c2dcf2"/><rect x="1364.5" y="792.30" width="20" height="1" fill="#c2dcf2"/><rect x="1364.5" y="794.95" width="20" height="1" fill="#c2dcf2"/><rect x="1364.5" y="797.60" width="20" height="1" fill="#c2dcf2"/><rect x="1364.5" y="800.25" width="20" height="1" fill="#c2dcf2"/><rect x="1384.5" y="851.0" width="22" height="22" fill="#74abdf"/><rect x="1385.5" y="852.20" width="20" height="1" fill="#c2dcf2"/><rect x="1385.5" y="854.85" width="20" height="1" fill="#c2dcf2"/><rect x="1385.5" y="857.50" width="20" height="1" fill="#c2dcf2"/><rect x="1385.5" y="860.15" width="20" height="1" fill="#c2dcf2"/><rect x="1385.5" y="862.80" width="20" height="1" fill="#c2dcf2"/><rect x="1385.5" y="865.45" width="20" height="1" fill="#c2dcf2"/><rect x="1385.5" y="868.10" width="20" height="1" fill="#c2dcf2"/><rect x="1385.5" y="870.75" width="20" height="1" fill="#c2dcf2"/><rect x="1400.5" y="780.5" width="22" height="22" fill="#74abdf"/><rect x="1401.5" y="781.70" width="20" height="1" fill="#c2dcf2"/><rect x="1401.5" y="784.35" width="20" height="1" fill="#c2dcf2"/><rect x="1401.5" y="787.00" width="20" height="1" fill="#c2dcf2"/><rect x="1401.5" y="789.65" width="20" height="1" fill="#c2dcf2"/><rect x="1401.5" y="792.30" width="20" height="1" fill="#c2dcf2"/><rect x="1401.5" y="794.95" width="20" height="1" fill="#c2dcf2"/><rect x="1401.5" y="797.60" width="20" height="1" fill="#c2dcf2"/><rect x="1401.5" y="800.25" width="20" height="1" fill="#c2dcf2"/><rect x="1421.5" y="851.0" width="22" height="22" fill="#74abdf"/><rect x="1422.5" y="852.20" width="20" height="1" fill="#c2dcf2"/><rect x="1422.5" y="854.85" width="20" height="1" fill="#c2dcf2"/><rect x="1422.5" y="857.50" width="20" height="1" fill="#c2dcf2"/><rect x="1422.5" y="860.15" width="20" height="1" fill="#c2dcf2"/><rect x="1422.5" y="862.80" width="20" height="1" fill="#c2dcf2"/><rect x="1422.5" y="865.45" width="20" height="1" fill="#c2dcf2"/><rect x="1422.5" y="868.10" width="20" height="1" fill="#c2dcf2"/><rect x="1422.5" y="870.75" width="20" height="1" fill="#c2dcf2"/><rect x="1.0" y="851.0" width="22" height="22" fill="#74abdf"/><rect x="2.0" y="852.20" width="20" height="1" fill="#c2dcf2"/><rect x="2.0" y="854.85" width="20" height="1" fill="#c2dcf2"/><rect x="2.0" y="857.50" width="20" height="1" fill="#c2dcf2"/><rect x="2.0" y="860.15" width="20" height="1" fill="#c2dcf2"/><rect x="2.0" y="862.80" width="20" height="1" fill="#c2dcf2"/><rect x="2.0" y="865.45" width="20" height="1" fill="#c2dcf2"/><rect x="2.0" y="868.10" width="20" height="1" fill="#c2dcf2"/><rect x="2.0" y="870.75" width="20" height="1" fill="#c2dcf2"/><path d="M1190.0 356 l7.5 -4.5 v9z M1210.0 356 l-7.5 -4.5 v9z" fill="#8f9399" opacity=".85"/><path d="M1227.0 356 l7.5 -4.5 v9z M1247.0 356 l-7.5 -4.5 v9z" fill="#8f9399" opacity=".85"/><path d="M1263.6 356 l7.5 -4.5 v9z M1283.6 356 l-7.5 -4.5 v9z" fill="#8f9399" opacity=".85"/><path d="M1300.0 356 l7.5 -4.5 v9z M1320.0 356 l-7.5 -4.5 v9z" fill="#8f9399" opacity=".85"/><path d="M1348.3 356 l7.5 -4.5 v9z M1368.3 356 l-7.5 -4.5 v9z" fill="#8f9399" opacity=".85"/><path d="M1385.5 356 l7.5 -4.5 v9z M1405.5 356 l-7.5 -4.5 v9z" fill="#8f9399" opacity=".85"/><path d="M1422.5 356 l7.5 -4.5 v9z M1442.5 356 l-7.5 -4.5 v9z" fill="#8f9399" opacity=".85"/><path d="M1190.0 525 l7.5 -4.5 v9z M1210.0 525 l-7.5 -4.5 v9z" fill="#8f9399" opacity=".85"/><path d="M1227.0 525 l7.5 -4.5 v9z M1247.0 525 l-7.5 -4.5 v9z" fill="#8f9399" opacity=".85"/><path d="M1263.6 525 l7.5 -4.5 v9z M1283.6 525 l-7.5 -4.5 v9z" fill="#8f9399" opacity=".85"/><path d="M1300.0 525 l7.5 -4.5 v9z M1320.0 525 l-7.5 -4.5 v9z" fill="#8f9399" opacity=".85"/><path d="M1348.3 525 l7.5 -4.5 v9z M1368.3 525 l-7.5 -4.5 v9z" fill="#8f9399" opacity=".85"/><path d="M1385.5 525 l7.5 -4.5 v9z M1405.5 525 l-7.5 -4.5 v9z" fill="#8f9399" opacity=".85"/><path d="M1422.5 525 l7.5 -4.5 v9z M1442.5 525 l-7.5 -4.5 v9z" fill="#8f9399" opacity=".85"/><path d="M1190.0 693 l7.5 -4.5 v9z M1210.0 693 l-7.5 -4.5 v9z" fill="#8f9399" opacity=".85"/><path d="M1227.0 693 l7.5 -4.5 v9z M1247.0 693 l-7.5 -4.5 v9z" fill="#8f9399" opacity=".85"/><path d="M1263.6 693 l7.5 -4.5 v9z M1283.6 693 l-7.5 -4.5 v9z" fill="#8f9399" opacity=".85"/><path d="M1300.0 693 l7.5 -4.5 v9z M1320.0 693 l-7.5 -4.5 v9z" fill="#8f9399" opacity=".85"/><path d="M1348.3 693 l7.5 -4.5 v9z M1368.3 693 l-7.5 -4.5 v9z" fill="#8f9399" opacity=".85"/><path d="M1385.5 693 l7.5 -4.5 v9z M1405.5 693 l-7.5 -4.5 v9z" fill="#8f9399" opacity=".85"/><path d="M1422.5 693 l7.5 -4.5 v9z M1442.5 693 l-7.5 -4.5 v9z" fill="#8f9399" opacity=".85"/><path d="M38.0 862 l7.5 -4.5 v9z M58.0 862 l-7.5 -4.5 v9z" fill="#8f9399" opacity=".85"/><path d="M84.0 862 l7.5 -4.5 v9z M104.0 862 l-7.5 -4.5 v9z" fill="#8f9399" opacity=".85"/><path d="M121.0 862 l7.5 -4.5 v9z M141.0 862 l-7.5 -4.5 v9z" fill="#8f9399" opacity=".85"/><path d="M158.0 862 l7.5 -4.5 v9z M178.0 862 l-7.5 -4.5 v9z" fill="#8f9399" opacity=".85"/><path d="M194.0 862 l7.5 -4.5 v9z M214.0 862 l-7.5 -4.5 v9z" fill="#8f9399" opacity=".85"/><path d="M241.0 862 l7.5 -4.5 v9z M261.0 862 l-7.5 -4.5 v9z" fill="#8f9399" opacity=".85"/><path d="M279.0 862 l7.5 -4.5 v9z M299.0 862 l-7.5 -4.5 v9z" fill="#8f9399" opacity=".85"/><path d="M315.5 862 l7.5 -4.5 v9z M335.5 862 l-7.5 -4.5 v9z" fill="#8f9399" opacity=".85"/><path d="M352.0 862 l7.5 -4.5 v9z M372.0 862 l-7.5 -4.5 v9z" fill="#8f9399" opacity=".85"/><path d="M403.0 862 l7.5 -4.5 v9z M423.0 862 l-7.5 -4.5 v9z" fill="#8f9399" opacity=".85"/><path d="M439.0 862 l7.5 -4.5 v9z M459.0 862 l-7.5 -4.5 v9z" fill="#8f9399" opacity=".85"/><path d="M476.0 862 l7.5 -4.5 v9z M496.0 862 l-7.5 -4.5 v9z" fill="#8f9399" opacity=".85"/><path d="M512.0 862 l7.5 -4.5 v9z M532.0 862 l-7.5 -4.5 v9z" fill="#8f9399" opacity=".85"/><path d="M559.0 862 l7.5 -4.5 v9z M579.0 862 l-7.5 -4.5 v9z" fill="#8f9399" opacity=".85"/><path d="M595.0 862 l7.5 -4.5 v9z M615.0 862 l-7.5 -4.5 v9z" fill="#8f9399" opacity=".85"/><path d="M631.0 862 l7.5 -4.5 v9z M651.0 862 l-7.5 -4.5 v9z" fill="#8f9399" opacity=".85"/><path d="M668.0 862 l7.5 -4.5 v9z M688.0 862 l-7.5 -4.5 v9z" fill="#8f9399" opacity=".85"/><path d="M712.0 862 l7.5 -4.5 v9z M732.0 862 l-7.5 -4.5 v9z" fill="#8f9399" opacity=".85"/><path d="M748.0 862 l7.5 -4.5 v9z M768.0 862 l-7.5 -4.5 v9z" fill="#8f9399" opacity=".85"/><path d="M785.0 862 l7.5 -4.5 v9z M805.0 862 l-7.5 -4.5 v9z" fill="#8f9399" opacity=".85"/><path d="M1190.0 862 l7.5 -4.5 v9z M1210.0 862 l-7.5 -4.5 v9z" fill="#8f9399" opacity=".85"/><path d="M1227.0 862 l7.5 -4.5 v9z M1247.0 862 l-7.5 -4.5 v9z" fill="#8f9399" opacity=".85"/><path d="M1263.6 862 l7.5 -4.5 v9z M1283.6 862 l-7.5 -4.5 v9z" fill="#8f9399" opacity=".85"/><path d="M1300.0 862 l7.5 -4.5 v9z M1320.0 862 l-7.5 -4.5 v9z" fill="#8f9399" opacity=".85"/><path d="M1348.3 862 l7.5 -4.5 v9z M1368.3 862 l-7.5 -4.5 v9z" fill="#8f9399" opacity=".85"/><path d="M1385.5 862 l7.5 -4.5 v9z M1405.5 862 l-7.5 -4.5 v9z" fill="#8f9399" opacity=".85"/><path d="M1422.5 862 l7.5 -4.5 v9z M1442.5 862 l-7.5 -4.5 v9z" fill="#8f9399" opacity=".85"/><path d="M2.0 862 l7.5 -4.5 v9z M22.0 862 l-7.5 -4.5 v9z" fill="#8f9399" opacity=".85"/><path d="M852.0 862 l7.5 -4.5 v9z M872.0 862 l-7.5 -4.5 v9z" fill="#8f9399" opacity=".85"/><path d="M985.0 862 l7.5 -4.5 v9z M1005.0 862 l-7.5 -4.5 v9z" fill="#8f9399" opacity=".85"/><path d="M1117.0 862 l7.5 -4.5 v9z M1137.0 862 l-7.5 -4.5 v9z" fill="#8f9399" opacity=".85"/><line x1="0" y1="356" x2="1442" y2="356" stroke="#555a61" stroke-width="1.3"/><line x1="0" y1="525" x2="1442" y2="525" stroke="#555a61" stroke-width="1.3"/><line x1="0" y1="693" x2="1442" y2="693" stroke="#555a61" stroke-width="1.3"/><line x1="0" y1="862" x2="1442" y2="862" stroke="#555a61" stroke-width="1.3"/><line x1="914.5" y1="729" x2="914.5" y2="862" stroke="#50555c" stroke-width="1.6"/><line x1="1075.3" y1="729" x2="1075.3" y2="862" stroke="#50555c" stroke-width="1.6"/><line x1="1179.0" y1="298.0" x2="1179.0" y2="349.0" stroke="#4f9ad6" stroke-width="1.5" stroke-dasharray="6 7.5"/><line x1="1216.0" y1="298.0" x2="1216.0" y2="349.0" stroke="#4f9ad6" stroke-width="1.5" stroke-dasharray="6 7.5"/><line x1="1252.6" y1="298.0" x2="1252.6" y2="349.0" stroke="#4f9ad6" stroke-width="1.5" stroke-dasharray="6 7.5"/><line x1="1289.0" y1="298.0" x2="1289.0" y2="349.0" stroke="#4f9ad6" stroke-width="1.5" stroke-dasharray="6 7.5"/><line x1="1337.3" y1="298.0" x2="1337.3" y2="349.0" stroke="#4f9ad6" stroke-width="1.5" stroke-dasharray="6 7.5"/><line x1="1374.5" y1="298.0" x2="1374.5" y2="349.0" stroke="#4f9ad6" stroke-width="1.5" stroke-dasharray="6 7.5"/><line x1="1411.5" y1="298.0" x2="1411.5" y2="349.0" stroke="#4f9ad6" stroke-width="1.5" stroke-dasharray="6 7.5"/><line x1="1179.0" y1="467.0" x2="1179.0" y2="518.0" stroke="#4f9ad6" stroke-width="1.5" stroke-dasharray="6 7.5"/><line x1="1216.0" y1="467.0" x2="1216.0" y2="518.0" stroke="#4f9ad6" stroke-width="1.5" stroke-dasharray="6 7.5"/><line x1="1252.6" y1="467.0" x2="1252.6" y2="518.0" stroke="#4f9ad6" stroke-width="1.5" stroke-dasharray="6 7.5"/><line x1="1289.0" y1="467.0" x2="1289.0" y2="518.0" stroke="#4f9ad6" stroke-width="1.5" stroke-dasharray="6 7.5"/><line x1="1337.3" y1="467.0" x2="1337.3" y2="518.0" stroke="#4f9ad6" stroke-width="1.5" stroke-dasharray="6 7.5"/><line x1="1374.5" y1="467.0" x2="1374.5" y2="518.0" stroke="#4f9ad6" stroke-width="1.5" stroke-dasharray="6 7.5"/><line x1="1411.5" y1="467.0" x2="1411.5" y2="518.0" stroke="#4f9ad6" stroke-width="1.5" stroke-dasharray="6 7.5"/><line x1="1179.0" y1="635.0" x2="1179.0" y2="686.0" stroke="#4f9ad6" stroke-width="1.5" stroke-dasharray="6 7.5"/><line x1="1216.0" y1="635.0" x2="1216.0" y2="686.0" stroke="#4f9ad6" stroke-width="1.5" stroke-dasharray="6 7.5"/><line x1="1252.6" y1="635.0" x2="1252.6" y2="686.0" stroke="#4f9ad6" stroke-width="1.5" stroke-dasharray="6 7.5"/><line x1="1289.0" y1="635.0" x2="1289.0" y2="686.0" stroke="#4f9ad6" stroke-width="1.5" stroke-dasharray="6 7.5"/><line x1="1337.3" y1="635.0" x2="1337.3" y2="686.0" stroke="#4f9ad6" stroke-width="1.5" stroke-dasharray="6 7.5"/><line x1="1374.5" y1="635.0" x2="1374.5" y2="686.0" stroke="#4f9ad6" stroke-width="1.5" stroke-dasharray="6 7.5"/><line x1="1411.5" y1="635.0" x2="1411.5" y2="686.0" stroke="#4f9ad6" stroke-width="1.5" stroke-dasharray="6 7.5"/><line x1="27.0" y1="804.0" x2="27.0" y2="855.0" stroke="#4f9ad6" stroke-width="1.5" stroke-dasharray="6 7.5"/><line x1="73.0" y1="804.0" x2="73.0" y2="855.0" stroke="#4f9ad6" stroke-width="1.5" stroke-dasharray="6 7.5"/><line x1="110.0" y1="804.0" x2="110.0" y2="855.0" stroke="#4f9ad6" stroke-width="1.5" stroke-dasharray="6 7.5"/><line x1="147.0" y1="804.0" x2="147.0" y2="855.0" stroke="#4f9ad6" stroke-width="1.5" stroke-dasharray="6 7.5"/><line x1="183.0" y1="804.0" x2="183.0" y2="855.0" stroke="#4f9ad6" stroke-width="1.5" stroke-dasharray="6 7.5"/><line x1="230.0" y1="804.0" x2="230.0" y2="855.0" stroke="#4f9ad6" stroke-width="1.5" stroke-dasharray="6 7.5"/><line x1="268.0" y1="804.0" x2="268.0" y2="855.0" stroke="#4f9ad6" stroke-width="1.5" stroke-dasharray="6 7.5"/><line x1="304.5" y1="804.0" x2="304.5" y2="855.0" stroke="#4f9ad6" stroke-width="1.5" stroke-dasharray="6 7.5"/><line x1="341.0" y1="804.0" x2="341.0" y2="855.0" stroke="#4f9ad6" stroke-width="1.5" stroke-dasharray="6 7.5"/><line x1="392.0" y1="804.0" x2="392.0" y2="855.0" stroke="#4f9ad6" stroke-width="1.5" stroke-dasharray="6 7.5"/><line x1="428.0" y1="804.0" x2="428.0" y2="855.0" stroke="#4f9ad6" stroke-width="1.5" stroke-dasharray="6 7.5"/><line x1="465.0" y1="804.0" x2="465.0" y2="855.0" stroke="#4f9ad6" stroke-width="1.5" stroke-dasharray="6 7.5"/><line x1="501.0" y1="804.0" x2="501.0" y2="855.0" stroke="#4f9ad6" stroke-width="1.5" stroke-dasharray="6 7.5"/><line x1="548.0" y1="804.0" x2="548.0" y2="855.0" stroke="#4f9ad6" stroke-width="1.5" stroke-dasharray="6 7.5"/><line x1="584.0" y1="804.0" x2="584.0" y2="855.0" stroke="#4f9ad6" stroke-width="1.5" stroke-dasharray="6 7.5"/><line x1="620.0" y1="804.0" x2="620.0" y2="855.0" stroke="#4f9ad6" stroke-width="1.5" stroke-dasharray="6 7.5"/><line x1="657.0" y1="804.0" x2="657.0" y2="855.0" stroke="#4f9ad6" stroke-width="1.5" stroke-dasharray="6 7.5"/><line x1="701.0" y1="804.0" x2="701.0" y2="855.0" stroke="#4f9ad6" stroke-width="1.5" stroke-dasharray="6 7.5"/><line x1="737.0" y1="804.0" x2="737.0" y2="855.0" stroke="#4f9ad6" stroke-width="1.5" stroke-dasharray="6 7.5"/><line x1="774.0" y1="804.0" x2="774.0" y2="855.0" stroke="#4f9ad6" stroke-width="1.5" stroke-dasharray="6 7.5"/><line x1="810.0" y1="804.0" x2="810.0" y2="855.0" stroke="#4f9ad6" stroke-width="1.5" stroke-dasharray="6 7.5"/><line x1="1179.0" y1="804.0" x2="1179.0" y2="855.0" stroke="#4f9ad6" stroke-width="1.5" stroke-dasharray="6 7.5"/><line x1="1216.0" y1="804.0" x2="1216.0" y2="855.0" stroke="#4f9ad6" stroke-width="1.5" stroke-dasharray="6 7.5"/><line x1="1252.6" y1="804.0" x2="1252.6" y2="855.0" stroke="#4f9ad6" stroke-width="1.5" stroke-dasharray="6 7.5"/><line x1="1289.0" y1="804.0" x2="1289.0" y2="855.0" stroke="#4f9ad6" stroke-width="1.5" stroke-dasharray="6 7.5"/><line x1="1337.3" y1="804.0" x2="1337.3" y2="855.0" stroke="#4f9ad6" stroke-width="1.5" stroke-dasharray="6 7.5"/><line x1="1374.5" y1="804.0" x2="1374.5" y2="855.0" stroke="#4f9ad6" stroke-width="1.5" stroke-dasharray="6 7.5"/><line x1="1411.5" y1="804.0" x2="1411.5" y2="855.0" stroke="#4f9ad6" stroke-width="1.5" stroke-dasharray="6 7.5"/><circle cx="1179.0" cy="356.0" r="9.4" fill="#f4f6f9" opacity=".85"/><circle cx="1179.0" cy="356.0" r="7" fill="#5580e0"/><circle cx="1216.0" cy="356.0" r="9.4" fill="#f4f6f9" opacity=".85"/><circle cx="1216.0" cy="356.0" r="7" fill="#5580e0"/><circle cx="1252.6" cy="356.0" r="9.4" fill="#f4f6f9" opacity=".85"/><circle cx="1252.6" cy="356.0" r="7" fill="#5580e0"/><circle cx="1289.0" cy="356.0" r="9.4" fill="#f4f6f9" opacity=".85"/><circle cx="1289.0" cy="356.0" r="7" fill="#5580e0"/><circle cx="1337.3" cy="356.0" r="9.4" fill="#f4f6f9" opacity=".85"/><circle cx="1337.3" cy="356.0" r="7" fill="#5580e0"/><circle cx="1374.5" cy="356.0" r="9.4" fill="#f4f6f9" opacity=".85"/><circle cx="1374.5" cy="356.0" r="7" fill="#5580e0"/><circle cx="1411.5" cy="356.0" r="9.4" fill="#f4f6f9" opacity=".85"/><circle cx="1411.5" cy="356.0" r="7" fill="#5580e0"/><circle cx="1179.0" cy="525.0" r="9.4" fill="#f4f6f9" opacity=".85"/><circle cx="1179.0" cy="525.0" r="7" fill="#5580e0"/><circle cx="1216.0" cy="525.0" r="9.4" fill="#f4f6f9" opacity=".85"/><circle cx="1216.0" cy="525.0" r="7" fill="#5580e0"/><circle cx="1252.6" cy="525.0" r="9.4" fill="#f4f6f9" opacity=".85"/><circle cx="1252.6" cy="525.0" r="7" fill="#5580e0"/><circle cx="1289.0" cy="525.0" r="9.4" fill="#f4f6f9" opacity=".85"/><circle cx="1289.0" cy="525.0" r="7" fill="#5580e0"/><circle cx="1337.3" cy="525.0" r="9.4" fill="#f4f6f9" opacity=".85"/><circle cx="1337.3" cy="525.0" r="7" fill="#5580e0"/><circle cx="1374.5" cy="525.0" r="9.4" fill="#f4f6f9" opacity=".85"/><circle cx="1374.5" cy="525.0" r="7" fill="#5580e0"/><circle cx="1411.5" cy="525.0" r="9.4" fill="#f4f6f9" opacity=".85"/><circle cx="1411.5" cy="525.0" r="7" fill="#5580e0"/><circle cx="1179.0" cy="693.0" r="9.4" fill="#f4f6f9" opacity=".85"/><circle cx="1179.0" cy="693.0" r="7" fill="#5580e0"/><circle cx="1216.0" cy="693.0" r="9.4" fill="#f4f6f9" opacity=".85"/><circle cx="1216.0" cy="693.0" r="7" fill="#5580e0"/><circle cx="1252.6" cy="693.0" r="9.4" fill="#f4f6f9" opacity=".85"/><circle cx="1252.6" cy="693.0" r="7" fill="#5580e0"/><circle cx="1289.0" cy="693.0" r="9.4" fill="#f4f6f9" opacity=".85"/><circle cx="1289.0" cy="693.0" r="7" fill="#5580e0"/><circle cx="1337.3" cy="693.0" r="9.4" fill="#f4f6f9" opacity=".85"/><circle cx="1337.3" cy="693.0" r="7" fill="#5580e0"/><circle cx="1374.5" cy="693.0" r="9.4" fill="#f4f6f9" opacity=".85"/><circle cx="1374.5" cy="693.0" r="7" fill="#5580e0"/><circle cx="1411.5" cy="693.0" r="9.4" fill="#f4f6f9" opacity=".85"/><circle cx="1411.5" cy="693.0" r="7" fill="#5580e0"/><circle cx="27.0" cy="862.0" r="9.4" fill="#f4f6f9" opacity=".85"/><circle cx="27.0" cy="862.0" r="7" fill="#5580e0"/><circle cx="73.0" cy="862.0" r="9.4" fill="#f4f6f9" opacity=".85"/><circle cx="73.0" cy="862.0" r="7" fill="#5580e0"/><circle cx="110.0" cy="862.0" r="9.4" fill="#f4f6f9" opacity=".85"/><circle cx="110.0" cy="862.0" r="7" fill="#5580e0"/><circle cx="147.0" cy="862.0" r="9.4" fill="#f4f6f9" opacity=".85"/><circle cx="147.0" cy="862.0" r="7" fill="#5580e0"/><circle cx="183.0" cy="862.0" r="9.4" fill="#f4f6f9" opacity=".85"/><circle cx="183.0" cy="862.0" r="7" fill="#5580e0"/><circle cx="230.0" cy="862.0" r="9.4" fill="#f4f6f9" opacity=".85"/><circle cx="230.0" cy="862.0" r="7" fill="#5580e0"/><circle cx="268.0" cy="862.0" r="9.4" fill="#f4f6f9" opacity=".85"/><circle cx="268.0" cy="862.0" r="7" fill="#5580e0"/><circle cx="304.5" cy="862.0" r="9.4" fill="#f4f6f9" opacity=".85"/><circle cx="304.5" cy="862.0" r="7" fill="#5580e0"/><circle cx="341.0" cy="862.0" r="9.4" fill="#f4f6f9" opacity=".85"/><circle cx="341.0" cy="862.0" r="7" fill="#5580e0"/><circle cx="392.0" cy="862.0" r="9.4" fill="#f4f6f9" opacity=".85"/><circle cx="392.0" cy="862.0" r="7" fill="#5580e0"/><circle cx="428.0" cy="862.0" r="9.4" fill="#f4f6f9" opacity=".85"/><circle cx="428.0" cy="862.0" r="7" fill="#5580e0"/><circle cx="465.0" cy="862.0" r="9.4" fill="#f4f6f9" opacity=".85"/><circle cx="465.0" cy="862.0" r="7" fill="#5580e0"/><circle cx="501.0" cy="862.0" r="9.4" fill="#f4f6f9" opacity=".85"/><circle cx="501.0" cy="862.0" r="7" fill="#5580e0"/><circle cx="548.0" cy="862.0" r="9.4" fill="#f4f6f9" opacity=".85"/><circle cx="548.0" cy="862.0" r="7" fill="#5580e0"/><circle cx="584.0" cy="862.0" r="9.4" fill="#f4f6f9" opacity=".85"/><circle cx="584.0" cy="862.0" r="7" fill="#5580e0"/><circle cx="620.0" cy="862.0" r="9.4" fill="#f4f6f9" opacity=".85"/><circle cx="620.0" cy="862.0" r="7" fill="#5580e0"/><circle cx="657.0" cy="862.0" r="9.4" fill="#f4f6f9" opacity=".85"/><circle cx="657.0" cy="862.0" r="7" fill="#5580e0"/><circle cx="701.0" cy="862.0" r="9.4" fill="#f4f6f9" opacity=".85"/><circle cx="701.0" cy="862.0" r="7" fill="#5580e0"/><circle cx="737.0" cy="862.0" r="9.4" fill="#f4f6f9" opacity=".85"/><circle cx="737.0" cy="862.0" r="7" fill="#5580e0"/><circle cx="774.0" cy="862.0" r="9.4" fill="#f4f6f9" opacity=".85"/><circle cx="774.0" cy="862.0" r="7" fill="#5580e0"/><circle cx="810.0" cy="862.0" r="9.4" fill="#f4f6f9" opacity=".85"/><circle cx="810.0" cy="862.0" r="7" fill="#5580e0"/><circle cx="914.5" cy="862.0" r="9.4" fill="#f4f6f9" opacity=".85"/><circle cx="914.5" cy="862.0" r="7" fill="#5580e0"/><circle cx="1075.3" cy="862.0" r="9.4" fill="#f4f6f9" opacity=".85"/><circle cx="1075.3" cy="862.0" r="7" fill="#5580e0"/><circle cx="1179.0" cy="862.0" r="9.4" fill="#f4f6f9" opacity=".85"/><circle cx="1179.0" cy="862.0" r="7" fill="#5580e0"/><circle cx="1216.0" cy="862.0" r="9.4" fill="#f4f6f9" opacity=".85"/><circle cx="1216.0" cy="862.0" r="7" fill="#5580e0"/><circle cx="1252.6" cy="862.0" r="9.4" fill="#f4f6f9" opacity=".85"/><circle cx="1252.6" cy="862.0" r="7" fill="#5580e0"/><circle cx="1289.0" cy="862.0" r="9.4" fill="#f4f6f9" opacity=".85"/><circle cx="1289.0" cy="862.0" r="7" fill="#5580e0"/><circle cx="1337.3" cy="862.0" r="9.4" fill="#f4f6f9" opacity=".85"/><circle cx="1337.3" cy="862.0" r="7" fill="#5580e0"/><circle cx="1374.5" cy="862.0" r="9.4" fill="#f4f6f9" opacity=".85"/><circle cx="1374.5" cy="862.0" r="7" fill="#5580e0"/><circle cx="1411.5" cy="862.0" r="9.4" fill="#f4f6f9" opacity=".85"/><circle cx="1411.5" cy="862.0" r="7" fill="#5580e0"/><text x="1179.0" y="335.0" text-anchor="middle" font-size="16.5" fill="#20242a">AP31</text><text x="1216.0" y="335.0" text-anchor="middle" font-size="16.5" fill="#20242a">AP30</text><text x="1252.6" y="335.0" text-anchor="middle" font-size="16.5" fill="#20242a">AP29</text><text x="1289.0" y="335.0" text-anchor="middle" font-size="16.5" fill="#20242a">AP28</text><text x="1337.3" y="335.0" text-anchor="middle" font-size="16.5" fill="#20242a">AP27</text><text x="1374.5" y="335.0" text-anchor="middle" font-size="16.5" fill="#20242a">AP26</text><text x="1411.5" y="335.0" text-anchor="middle" font-size="16.5" fill="#20242a">AP25</text><text x="1179.0" y="504.0" text-anchor="middle" font-size="16.5" fill="#20242a">AP59</text><text x="1216.0" y="504.0" text-anchor="middle" font-size="16.5" fill="#20242a">AP58</text><text x="1252.6" y="504.0" text-anchor="middle" font-size="16.5" fill="#20242a">AP57</text><text x="1289.0" y="504.0" text-anchor="middle" font-size="16.5" fill="#20242a">AP56</text><text x="1337.3" y="504.0" text-anchor="middle" font-size="16.5" fill="#20242a">AP55</text><text x="1374.5" y="504.0" text-anchor="middle" font-size="16.5" fill="#20242a">AP54</text><text x="1411.5" y="504.0" text-anchor="middle" font-size="16.5" fill="#20242a">AP53</text><text x="1179.0" y="672.0" text-anchor="middle" font-size="16.5" fill="#20242a">AP87</text><text x="1216.0" y="672.0" text-anchor="middle" font-size="16.5" fill="#20242a">AP86</text><text x="1252.6" y="672.0" text-anchor="middle" font-size="16.5" fill="#20242a">AP85</text><text x="1289.0" y="672.0" text-anchor="middle" font-size="16.5" fill="#20242a">AP84</text><text x="1337.3" y="672.0" text-anchor="middle" font-size="16.5" fill="#20242a">AP83</text><text x="1374.5" y="672.0" text-anchor="middle" font-size="16.5" fill="#20242a">AP82</text><text x="1411.5" y="672.0" text-anchor="middle" font-size="16.5" fill="#20242a">AP81</text><text x="27.0" y="841.0" text-anchor="middle" font-size="16.5" fill="#20242a">AP220</text><text x="73.0" y="841.0" text-anchor="middle" font-size="16.5" fill="#20242a">AP216</text><text x="110.0" y="841.0" text-anchor="middle" font-size="16.5" fill="#20242a">AP212</text><text x="147.0" y="841.0" text-anchor="middle" font-size="16.5" fill="#20242a">AP208</text><text x="183.0" y="841.0" text-anchor="middle" font-size="16.5" fill="#20242a">AP204</text><text x="230.0" y="841.0" text-anchor="middle" font-size="16.5" fill="#20242a">AP200</text><text x="268.0" y="841.0" text-anchor="middle" font-size="16.5" fill="#20242a">AP196</text><text x="304.5" y="841.0" text-anchor="middle" font-size="16.5" fill="#20242a">AP192</text><text x="341.0" y="841.0" text-anchor="middle" font-size="16.5" fill="#20242a">AP188</text><text x="392.0" y="841.0" text-anchor="middle" font-size="16.5" fill="#20242a">AP184</text><text x="428.0" y="841.0" text-anchor="middle" font-size="16.5" fill="#20242a">AP180</text><text x="465.0" y="841.0" text-anchor="middle" font-size="16.5" fill="#20242a">AP176</text><text x="501.0" y="841.0" text-anchor="middle" font-size="16.5" fill="#20242a">AP172</text><text x="548.0" y="841.0" text-anchor="middle" font-size="16.5" fill="#20242a">AP168</text><text x="584.0" y="841.0" text-anchor="middle" font-size="16.5" fill="#20242a">AP164</text><text x="620.0" y="841.0" text-anchor="middle" font-size="16.5" fill="#20242a">AP160</text><text x="657.0" y="841.0" text-anchor="middle" font-size="16.5" fill="#20242a">AP156</text><text x="701.0" y="841.0" text-anchor="middle" font-size="16.5" fill="#20242a">AP152</text><text x="737.0" y="841.0" text-anchor="middle" font-size="16.5" fill="#20242a">AP148</text><text x="774.0" y="841.0" text-anchor="middle" font-size="16.5" fill="#20242a">AP144</text><text x="810.0" y="841.0" text-anchor="middle" font-size="16.5" fill="#20242a">AP140</text><text x="914.5" y="841.0" text-anchor="middle" font-size="16.5" fill="#20242a">LM2772</text><text x="1075.3" y="841.0" text-anchor="middle" font-size="16.5" fill="#20242a">LM2771</text><text x="1179.0" y="841.0" text-anchor="middle" font-size="16.5" fill="#20242a">AP115</text><text x="1216.0" y="841.0" text-anchor="middle" font-size="16.5" fill="#20242a">AP114</text><text x="1252.6" y="841.0" text-anchor="middle" font-size="16.5" fill="#20242a">AP113</text><text x="1289.0" y="841.0" text-anchor="middle" font-size="16.5" fill="#20242a">AP112</text><text x="1337.3" y="841.0" text-anchor="middle" font-size="16.5" fill="#20242a">AP111</text><text x="1374.5" y="841.0" text-anchor="middle" font-size="16.5" fill="#20242a">AP110</text><text x="1411.5" y="841.0" text-anchor="middle" font-size="16.5" fill="#20242a">AP109</text><rect x="21.0" y="973.5" width="22" height="22" fill="#74abdf"/><rect x="22.0" y="974.70" width="20" height="1" fill="#c2dcf2"/><rect x="22.0" y="977.35" width="20" height="1" fill="#c2dcf2"/><rect x="22.0" y="980.00" width="20" height="1" fill="#c2dcf2"/><rect x="22.0" y="982.65" width="20" height="1" fill="#c2dcf2"/><rect x="22.0" y="985.30" width="20" height="1" fill="#c2dcf2"/><rect x="22.0" y="987.95" width="20" height="1" fill="#c2dcf2"/><rect x="22.0" y="990.60" width="20" height="1" fill="#c2dcf2"/><rect x="22.0" y="993.25" width="20" height="1" fill="#c2dcf2"/><line x1="32.0" y1="997.0" x2="32.0" y2="1051.0" stroke="#4f9ad6" stroke-width="1.5" stroke-dasharray="6 7.5"/><rect x="86.0" y="973.5" width="22" height="22" fill="#74abdf"/><rect x="87.0" y="974.70" width="20" height="1" fill="#c2dcf2"/><rect x="87.0" y="977.35" width="20" height="1" fill="#c2dcf2"/><rect x="87.0" y="980.00" width="20" height="1" fill="#c2dcf2"/><rect x="87.0" y="982.65" width="20" height="1" fill="#c2dcf2"/><rect x="87.0" y="985.30" width="20" height="1" fill="#c2dcf2"/><rect x="87.0" y="987.95" width="20" height="1" fill="#c2dcf2"/><rect x="87.0" y="990.60" width="20" height="1" fill="#c2dcf2"/><rect x="87.0" y="993.25" width="20" height="1" fill="#c2dcf2"/><line x1="97.0" y1="997.0" x2="97.0" y2="1051.0" stroke="#4f9ad6" stroke-width="1.5" stroke-dasharray="6 7.5"/><rect x="136.0" y="973.5" width="22" height="22" fill="#74abdf"/><rect x="137.0" y="974.70" width="20" height="1" fill="#c2dcf2"/><rect x="137.0" y="977.35" width="20" height="1" fill="#c2dcf2"/><rect x="137.0" y="980.00" width="20" height="1" fill="#c2dcf2"/><rect x="137.0" y="982.65" width="20" height="1" fill="#c2dcf2"/><rect x="137.0" y="985.30" width="20" height="1" fill="#c2dcf2"/><rect x="137.0" y="987.95" width="20" height="1" fill="#c2dcf2"/><rect x="137.0" y="990.60" width="20" height="1" fill="#c2dcf2"/><rect x="137.0" y="993.25" width="20" height="1" fill="#c2dcf2"/><line x1="147.0" y1="997.0" x2="147.0" y2="1051.0" stroke="#4f9ad6" stroke-width="1.5" stroke-dasharray="6 7.5"/><rect x="191.0" y="973.5" width="22" height="22" fill="#74abdf"/><rect x="192.0" y="974.70" width="20" height="1" fill="#c2dcf2"/><rect x="192.0" y="977.35" width="20" height="1" fill="#c2dcf2"/><rect x="192.0" y="980.00" width="20" height="1" fill="#c2dcf2"/><rect x="192.0" y="982.65" width="20" height="1" fill="#c2dcf2"/><rect x="192.0" y="985.30" width="20" height="1" fill="#c2dcf2"/><rect x="192.0" y="987.95" width="20" height="1" fill="#c2dcf2"/><rect x="192.0" y="990.60" width="20" height="1" fill="#c2dcf2"/><rect x="192.0" y="993.25" width="20" height="1" fill="#c2dcf2"/><line x1="202.0" y1="997.0" x2="202.0" y2="1051.0" stroke="#4f9ad6" stroke-width="1.5" stroke-dasharray="6 7.5"/><rect x="255.0" y="973.5" width="22" height="22" fill="#74abdf"/><rect x="256.0" y="974.70" width="20" height="1" fill="#c2dcf2"/><rect x="256.0" y="977.35" width="20" height="1" fill="#c2dcf2"/><rect x="256.0" y="980.00" width="20" height="1" fill="#c2dcf2"/><rect x="256.0" y="982.65" width="20" height="1" fill="#c2dcf2"/><rect x="256.0" y="985.30" width="20" height="1" fill="#c2dcf2"/><rect x="256.0" y="987.95" width="20" height="1" fill="#c2dcf2"/><rect x="256.0" y="990.60" width="20" height="1" fill="#c2dcf2"/><rect x="256.0" y="993.25" width="20" height="1" fill="#c2dcf2"/><line x1="266.0" y1="997.0" x2="266.0" y2="1051.0" stroke="#4f9ad6" stroke-width="1.5" stroke-dasharray="6 7.5"/><rect x="305.0" y="973.5" width="22" height="22" fill="#74abdf"/><rect x="306.0" y="974.70" width="20" height="1" fill="#c2dcf2"/><rect x="306.0" y="977.35" width="20" height="1" fill="#c2dcf2"/><rect x="306.0" y="980.00" width="20" height="1" fill="#c2dcf2"/><rect x="306.0" y="982.65" width="20" height="1" fill="#c2dcf2"/><rect x="306.0" y="985.30" width="20" height="1" fill="#c2dcf2"/><rect x="306.0" y="987.95" width="20" height="1" fill="#c2dcf2"/><rect x="306.0" y="990.60" width="20" height="1" fill="#c2dcf2"/><rect x="306.0" y="993.25" width="20" height="1" fill="#c2dcf2"/><line x1="316.0" y1="997.0" x2="316.0" y2="1051.0" stroke="#4f9ad6" stroke-width="1.5" stroke-dasharray="6 7.5"/><rect x="360.0" y="973.5" width="22" height="22" fill="#74abdf"/><rect x="361.0" y="974.70" width="20" height="1" fill="#c2dcf2"/><rect x="361.0" y="977.35" width="20" height="1" fill="#c2dcf2"/><rect x="361.0" y="980.00" width="20" height="1" fill="#c2dcf2"/><rect x="361.0" y="982.65" width="20" height="1" fill="#c2dcf2"/><rect x="361.0" y="985.30" width="20" height="1" fill="#c2dcf2"/><rect x="361.0" y="987.95" width="20" height="1" fill="#c2dcf2"/><rect x="361.0" y="990.60" width="20" height="1" fill="#c2dcf2"/><rect x="361.0" y="993.25" width="20" height="1" fill="#c2dcf2"/><line x1="371.0" y1="997.0" x2="371.0" y2="1051.0" stroke="#4f9ad6" stroke-width="1.5" stroke-dasharray="6 7.5"/><rect x="424.0" y="973.5" width="22" height="22" fill="#74abdf"/><rect x="425.0" y="974.70" width="20" height="1" fill="#c2dcf2"/><rect x="425.0" y="977.35" width="20" height="1" fill="#c2dcf2"/><rect x="425.0" y="980.00" width="20" height="1" fill="#c2dcf2"/><rect x="425.0" y="982.65" width="20" height="1" fill="#c2dcf2"/><rect x="425.0" y="985.30" width="20" height="1" fill="#c2dcf2"/><rect x="425.0" y="987.95" width="20" height="1" fill="#c2dcf2"/><rect x="425.0" y="990.60" width="20" height="1" fill="#c2dcf2"/><rect x="425.0" y="993.25" width="20" height="1" fill="#c2dcf2"/><line x1="435.0" y1="997.0" x2="435.0" y2="1051.0" stroke="#4f9ad6" stroke-width="1.5" stroke-dasharray="6 7.5"/><rect x="474.0" y="973.5" width="22" height="22" fill="#74abdf"/><rect x="475.0" y="974.70" width="20" height="1" fill="#c2dcf2"/><rect x="475.0" y="977.35" width="20" height="1" fill="#c2dcf2"/><rect x="475.0" y="980.00" width="20" height="1" fill="#c2dcf2"/><rect x="475.0" y="982.65" width="20" height="1" fill="#c2dcf2"/><rect x="475.0" y="985.30" width="20" height="1" fill="#c2dcf2"/><rect x="475.0" y="987.95" width="20" height="1" fill="#c2dcf2"/><rect x="475.0" y="990.60" width="20" height="1" fill="#c2dcf2"/><rect x="475.0" y="993.25" width="20" height="1" fill="#c2dcf2"/><line x1="485.0" y1="997.0" x2="485.0" y2="1051.0" stroke="#4f9ad6" stroke-width="1.5" stroke-dasharray="6 7.5"/><rect x="529.0" y="973.5" width="22" height="22" fill="#74abdf"/><rect x="530.0" y="974.70" width="20" height="1" fill="#c2dcf2"/><rect x="530.0" y="977.35" width="20" height="1" fill="#c2dcf2"/><rect x="530.0" y="980.00" width="20" height="1" fill="#c2dcf2"/><rect x="530.0" y="982.65" width="20" height="1" fill="#c2dcf2"/><rect x="530.0" y="985.30" width="20" height="1" fill="#c2dcf2"/><rect x="530.0" y="987.95" width="20" height="1" fill="#c2dcf2"/><rect x="530.0" y="990.60" width="20" height="1" fill="#c2dcf2"/><rect x="530.0" y="993.25" width="20" height="1" fill="#c2dcf2"/><line x1="540.0" y1="997.0" x2="540.0" y2="1051.0" stroke="#4f9ad6" stroke-width="1.5" stroke-dasharray="6 7.5"/><rect x="587.6" y="973.5" width="22" height="22" fill="#74abdf"/><rect x="588.6" y="974.70" width="20" height="1" fill="#c2dcf2"/><rect x="588.6" y="977.35" width="20" height="1" fill="#c2dcf2"/><rect x="588.6" y="980.00" width="20" height="1" fill="#c2dcf2"/><rect x="588.6" y="982.65" width="20" height="1" fill="#c2dcf2"/><rect x="588.6" y="985.30" width="20" height="1" fill="#c2dcf2"/><rect x="588.6" y="987.95" width="20" height="1" fill="#c2dcf2"/><rect x="588.6" y="990.60" width="20" height="1" fill="#c2dcf2"/><rect x="588.6" y="993.25" width="20" height="1" fill="#c2dcf2"/><line x1="598.6" y1="997.0" x2="598.6" y2="1051.0" stroke="#4f9ad6" stroke-width="1.5" stroke-dasharray="6 7.5"/><rect x="643.0" y="973.5" width="22" height="22" fill="#74abdf"/><rect x="644.0" y="974.70" width="20" height="1" fill="#c2dcf2"/><rect x="644.0" y="977.35" width="20" height="1" fill="#c2dcf2"/><rect x="644.0" y="980.00" width="20" height="1" fill="#c2dcf2"/><rect x="644.0" y="982.65" width="20" height="1" fill="#c2dcf2"/><rect x="644.0" y="985.30" width="20" height="1" fill="#c2dcf2"/><rect x="644.0" y="987.95" width="20" height="1" fill="#c2dcf2"/><rect x="644.0" y="990.60" width="20" height="1" fill="#c2dcf2"/><rect x="644.0" y="993.25" width="20" height="1" fill="#c2dcf2"/><line x1="654.0" y1="997.0" x2="654.0" y2="1051.0" stroke="#4f9ad6" stroke-width="1.5" stroke-dasharray="6 7.5"/><rect x="693.0" y="973.5" width="22" height="22" fill="#74abdf"/><rect x="694.0" y="974.70" width="20" height="1" fill="#c2dcf2"/><rect x="694.0" y="977.35" width="20" height="1" fill="#c2dcf2"/><rect x="694.0" y="980.00" width="20" height="1" fill="#c2dcf2"/><rect x="694.0" y="982.65" width="20" height="1" fill="#c2dcf2"/><rect x="694.0" y="985.30" width="20" height="1" fill="#c2dcf2"/><rect x="694.0" y="987.95" width="20" height="1" fill="#c2dcf2"/><rect x="694.0" y="990.60" width="20" height="1" fill="#c2dcf2"/><rect x="694.0" y="993.25" width="20" height="1" fill="#c2dcf2"/><line x1="704.0" y1="997.0" x2="704.0" y2="1051.0" stroke="#4f9ad6" stroke-width="1.5" stroke-dasharray="6 7.5"/><rect x="753.5" y="973.5" width="22" height="22" fill="#74abdf"/><rect x="754.5" y="974.70" width="20" height="1" fill="#c2dcf2"/><rect x="754.5" y="977.35" width="20" height="1" fill="#c2dcf2"/><rect x="754.5" y="980.00" width="20" height="1" fill="#c2dcf2"/><rect x="754.5" y="982.65" width="20" height="1" fill="#c2dcf2"/><rect x="754.5" y="985.30" width="20" height="1" fill="#c2dcf2"/><rect x="754.5" y="987.95" width="20" height="1" fill="#c2dcf2"/><rect x="754.5" y="990.60" width="20" height="1" fill="#c2dcf2"/><rect x="754.5" y="993.25" width="20" height="1" fill="#c2dcf2"/><line x1="764.5" y1="997.0" x2="764.5" y2="1051.0" stroke="#4f9ad6" stroke-width="1.5" stroke-dasharray="6 7.5"/><rect x="806.0" y="973.5" width="22" height="22" fill="#74abdf"/><rect x="807.0" y="974.70" width="20" height="1" fill="#c2dcf2"/><rect x="807.0" y="977.35" width="20" height="1" fill="#c2dcf2"/><rect x="807.0" y="980.00" width="20" height="1" fill="#c2dcf2"/><rect x="807.0" y="982.65" width="20" height="1" fill="#c2dcf2"/><rect x="807.0" y="985.30" width="20" height="1" fill="#c2dcf2"/><rect x="807.0" y="987.95" width="20" height="1" fill="#c2dcf2"/><rect x="807.0" y="990.60" width="20" height="1" fill="#c2dcf2"/><rect x="807.0" y="993.25" width="20" height="1" fill="#c2dcf2"/><line x1="817.0" y1="997.0" x2="817.0" y2="1051.0" stroke="#4f9ad6" stroke-width="1.5" stroke-dasharray="6 7.5"/><rect x="863.5" y="973.5" width="22" height="22" fill="#74abdf"/><rect x="864.5" y="974.70" width="20" height="1" fill="#c2dcf2"/><rect x="864.5" y="977.35" width="20" height="1" fill="#c2dcf2"/><rect x="864.5" y="980.00" width="20" height="1" fill="#c2dcf2"/><rect x="864.5" y="982.65" width="20" height="1" fill="#c2dcf2"/><rect x="864.5" y="985.30" width="20" height="1" fill="#c2dcf2"/><rect x="864.5" y="987.95" width="20" height="1" fill="#c2dcf2"/><rect x="864.5" y="990.60" width="20" height="1" fill="#c2dcf2"/><rect x="864.5" y="993.25" width="20" height="1" fill="#c2dcf2"/><line x1="874.5" y1="997.0" x2="874.5" y2="1051.0" stroke="#4f9ad6" stroke-width="1.5" stroke-dasharray="6 7.5"/><rect x="1103.6" y="973.5" width="22" height="22" fill="#74abdf"/><rect x="1104.6" y="974.70" width="20" height="1" fill="#c2dcf2"/><rect x="1104.6" y="977.35" width="20" height="1" fill="#c2dcf2"/><rect x="1104.6" y="980.00" width="20" height="1" fill="#c2dcf2"/><rect x="1104.6" y="982.65" width="20" height="1" fill="#c2dcf2"/><rect x="1104.6" y="985.30" width="20" height="1" fill="#c2dcf2"/><rect x="1104.6" y="987.95" width="20" height="1" fill="#c2dcf2"/><rect x="1104.6" y="990.60" width="20" height="1" fill="#c2dcf2"/><rect x="1104.6" y="993.25" width="20" height="1" fill="#c2dcf2"/><line x1="1114.6" y1="997.0" x2="1114.6" y2="1051.0" stroke="#4f9ad6" stroke-width="1.5" stroke-dasharray="6 7.5"/><rect x="1154.0" y="973.5" width="22" height="22" fill="#74abdf"/><rect x="1155.0" y="974.70" width="20" height="1" fill="#c2dcf2"/><rect x="1155.0" y="977.35" width="20" height="1" fill="#c2dcf2"/><rect x="1155.0" y="980.00" width="20" height="1" fill="#c2dcf2"/><rect x="1155.0" y="982.65" width="20" height="1" fill="#c2dcf2"/><rect x="1155.0" y="985.30" width="20" height="1" fill="#c2dcf2"/><rect x="1155.0" y="987.95" width="20" height="1" fill="#c2dcf2"/><rect x="1155.0" y="990.60" width="20" height="1" fill="#c2dcf2"/><rect x="1155.0" y="993.25" width="20" height="1" fill="#c2dcf2"/><line x1="1165.0" y1="997.0" x2="1165.0" y2="1051.0" stroke="#4f9ad6" stroke-width="1.5" stroke-dasharray="6 7.5"/><rect x="1209.0" y="973.5" width="22" height="22" fill="#74abdf"/><rect x="1210.0" y="974.70" width="20" height="1" fill="#c2dcf2"/><rect x="1210.0" y="977.35" width="20" height="1" fill="#c2dcf2"/><rect x="1210.0" y="980.00" width="20" height="1" fill="#c2dcf2"/><rect x="1210.0" y="982.65" width="20" height="1" fill="#c2dcf2"/><rect x="1210.0" y="985.30" width="20" height="1" fill="#c2dcf2"/><rect x="1210.0" y="987.95" width="20" height="1" fill="#c2dcf2"/><rect x="1210.0" y="990.60" width="20" height="1" fill="#c2dcf2"/><rect x="1210.0" y="993.25" width="20" height="1" fill="#c2dcf2"/><line x1="1220.0" y1="997.0" x2="1220.0" y2="1051.0" stroke="#4f9ad6" stroke-width="1.5" stroke-dasharray="6 7.5"/><rect x="1266.6" y="973.5" width="22" height="22" fill="#74abdf"/><rect x="1267.6" y="974.70" width="20" height="1" fill="#c2dcf2"/><rect x="1267.6" y="977.35" width="20" height="1" fill="#c2dcf2"/><rect x="1267.6" y="980.00" width="20" height="1" fill="#c2dcf2"/><rect x="1267.6" y="982.65" width="20" height="1" fill="#c2dcf2"/><rect x="1267.6" y="985.30" width="20" height="1" fill="#c2dcf2"/><rect x="1267.6" y="987.95" width="20" height="1" fill="#c2dcf2"/><rect x="1267.6" y="990.60" width="20" height="1" fill="#c2dcf2"/><rect x="1267.6" y="993.25" width="20" height="1" fill="#c2dcf2"/><line x1="1277.6" y1="997.0" x2="1277.6" y2="1051.0" stroke="#4f9ad6" stroke-width="1.5" stroke-dasharray="6 7.5"/><rect x="1317.0" y="973.5" width="22" height="22" fill="#74abdf"/><rect x="1318.0" y="974.70" width="20" height="1" fill="#c2dcf2"/><rect x="1318.0" y="977.35" width="20" height="1" fill="#c2dcf2"/><rect x="1318.0" y="980.00" width="20" height="1" fill="#c2dcf2"/><rect x="1318.0" y="982.65" width="20" height="1" fill="#c2dcf2"/><rect x="1318.0" y="985.30" width="20" height="1" fill="#c2dcf2"/><rect x="1318.0" y="987.95" width="20" height="1" fill="#c2dcf2"/><rect x="1318.0" y="990.60" width="20" height="1" fill="#c2dcf2"/><rect x="1318.0" y="993.25" width="20" height="1" fill="#c2dcf2"/><line x1="1328.0" y1="997.0" x2="1328.0" y2="1051.0" stroke="#4f9ad6" stroke-width="1.5" stroke-dasharray="6 7.5"/><rect x="1372.0" y="973.5" width="22" height="22" fill="#74abdf"/><rect x="1373.0" y="974.70" width="20" height="1" fill="#c2dcf2"/><rect x="1373.0" y="977.35" width="20" height="1" fill="#c2dcf2"/><rect x="1373.0" y="980.00" width="20" height="1" fill="#c2dcf2"/><rect x="1373.0" y="982.65" width="20" height="1" fill="#c2dcf2"/><rect x="1373.0" y="985.30" width="20" height="1" fill="#c2dcf2"/><rect x="1373.0" y="987.95" width="20" height="1" fill="#c2dcf2"/><rect x="1373.0" y="990.60" width="20" height="1" fill="#c2dcf2"/><rect x="1373.0" y="993.25" width="20" height="1" fill="#c2dcf2"/><line x1="1383.0" y1="997.0" x2="1383.0" y2="1051.0" stroke="#4f9ad6" stroke-width="1.5" stroke-dasharray="6 7.5"/><text x="914" y="919" font-size="16" fill="#20242a"></text></svg>
<div class="a" style="left:646px;top:1020.5px;width:116px;height:60px;background:#1d2027;border-radius:12px 0 0 0;border-left:3px solid #1a3cff;border-top:2px solid #1a3cff;border-right:2px solid #1a3cff"></div>
<div class="a" style="left:650px;top:1033px;width:60px;height:40px;background:#3c4048;border-radius:14px 0 0 0"></div>
<div class="a" style="left:666px;top:1040px;width:44px;height:40px;background:#1d2027"></div>
<div class="a" style="left:714px;top:1027.5px;width:13px;height:40px;background:#3c4048"></div>
<div class="a" style="left:727px;top:1032px;width:25px;height:8.5px;background:#3c4048"></div>
<div class="a" style="left:646px;top:1019px;width:100px;height:0;border-top:1.5px dashed #5fc8c0"></div>
<div class="a" style="left:-35px;top:1003.3px;width:89px;height:32px;background:rgba(255,255,255,.62);box-shadow:0 1px 4px rgba(0,0,0,.12)"></div>
<div class="t" style="left:-10.4px;top:1006px;font-size:16px;color:#20242a">无运单</div>
<div class="a" style="left:-29.4px;top:1027.8px;width:11px;height:5.2px;background:#c9ccd1"></div>
<div class="a" style="left:-16.2px;top:1027.8px;width:11px;height:5.2px;background:#c9ccd1"></div>
<div class="a" style="left:-3.0px;top:1027.8px;width:11px;height:5.2px;background:#c9ccd1"></div>
<div class="a" style="left:10.2px;top:1027.8px;width:11px;height:5.2px;background:#c9ccd1"></div>
<div class="a" style="left:23.4px;top:1027.8px;width:11px;height:5.2px;background:#c9ccd1"></div>
<div class="a" style="left:36.6px;top:1027.8px;width:11px;height:5.2px;background:#c9ccd1"></div>
<div class="a" style="left:742px;top:1003.3px;width:89px;height:32px;background:rgba(255,255,255,.62);box-shadow:0 1px 4px rgba(0,0,0,.12)"></div>
<div class="t" style="left:766.6px;top:1006px;font-size:16px;color:#20242a">无运单</div>
<div class="a" style="left:747.6px;top:1027.8px;width:11px;height:5.2px;background:#c9ccd1"></div>
<div class="a" style="left:760.8px;top:1027.8px;width:11px;height:5.2px;background:#c9ccd1"></div>
<div class="a" style="left:774.0px;top:1027.8px;width:11px;height:5.2px;background:#c9ccd1"></div>
<div class="a" style="left:787.2px;top:1027.8px;width:11px;height:5.2px;background:#c9ccd1"></div>
<div class="a" style="left:800.4px;top:1027.8px;width:11px;height:5.2px;background:#c9ccd1"></div>
<div class="a" style="left:813.6px;top:1027.8px;width:11px;height:5.2px;background:#c9ccd1"></div>
<div class="a" style="left:22px;top:23px;width:107px;height:56px;border-radius:12px;background:#fff;box-shadow:0 1px 6px rgba(0,0,0,.08)"></div>
<div class="t" style="left:38.5px;top:40.5px;font-size:20px;font-weight:bold;color:#1040d8">Area-02</div>
<div class="a" style="left:1256px;top:22px;width:163px;height:56px;border-radius:12px;background:#fff;box-shadow:0 1px 6px rgba(0,0,0,.08)"></div>
<svg class="a" style="left:1256px;top:21.5px" width="163" height="56" viewBox="0 0 163 56"><circle cx="27" cy="26.5" r="9.3" fill="none" stroke="#40454c" stroke-width="2.1"/><path d="M33.8 33.3l5.5 5.5" stroke="#40454c" stroke-width="2.3" stroke-linecap="round"/><path d="M40 45.5l5.5-5.5v5.5z" fill="#40454c"/><path d="M67.5 20.5h13.5l-5 6.5v9l-3.5-2.2v-6.8z" fill="none" stroke="#40454c" stroke-width="2.1" stroke-linejoin="round"/><path d="M83 21h6M80 27.5h9M80 34h9" stroke="#40454c" stroke-width="2"/><path d="M89 45.5l5.5-5.5v5.5z" fill="#40454c"/><line x1="107" y1="17" x2="107" y2="39" stroke="#c9ccd1" stroke-width="1.2"/><path d="M125 26.5c2.8-5 6.5-8 10.5-8s7.7 3 10.5 8c-2.8 5-6.5 8-10.5 8s-7.7-3-10.5-8z" fill="none" stroke="#40454c" stroke-width="2.1"/><circle cx="135.5" cy="26.5" r="4.2" fill="none" stroke="#40454c" stroke-width="2"/><path d="M133 26a2.5 2.5 0 0 1 2.5-2.5v2.5z" fill="#40454c"/><path d="M147 45.5l5.5-5.5v5.5z" fill="#40454c"/></svg>
<div class="a" style="left:0;top:-2px;width:132px;height:4px;background:repeating-linear-gradient(90deg,#1040ff 0 14px,transparent 14px 17px)"></div>
</div>
<div class="a" style="left:1979px;top:679.5px;width:23px;height:57.5px;border-radius:10px 0 0 10px;background:#ffffff"></div>
<svg class="a" style="left:1983px;top:699px" width="14" height="22" viewBox="0 0 14 22"><path d="M11 2.5l-8 8.5 8 8.5" fill="none" stroke="#2f343b" stroke-width="1.8"/></svg>
<div class="a" style="left:1957.5px;top:737px;width:55.5px;height:168px;border-radius:10px;background:rgba(110,112,116,.27)"></div>
<svg class="a" style="left:1957.5px;top:737px" width="56" height="168" viewBox="0 0 56 168"><path d="M20 30.5l2.5-10.5h11l2.5 10.5" fill="none" stroke="#6f7277" stroke-width="2.2" stroke-linejoin="round"/><path d="M27 22.5l-2 7" stroke="#6f7277" stroke-width="1.8"/><rect x="17" y="30.5" width="22" height="6" rx="2" fill="none" stroke="#6f7277" stroke-width="2.2"/><path d="M14 16.5l3.5 2.5M13 24h4.5M42 16.5l-3.5 2.5M43 24h-4.5" stroke="#6f7277" stroke-width="2" stroke-linecap="round"/><rect x="15" y="73.5" width="26" height="19" rx="2" fill="none" stroke="#6f7277" stroke-width="2.4"/><path d="M25 83h11M30.5 77.5v11" stroke="#6f7277" stroke-width="2"/><rect x="19" y="129" width="19" height="22.5" rx="3" fill="#6f7277"/><path d="M24.5 131v-4.5h8v4.5z" fill="#6f7277" stroke="#6f7277" stroke-width="2" stroke-linejoin="round"/><path d="M24 136h9" stroke="#8f9296" stroke-width="1.5"/></svg>
<div class="a" style="left:560px;top:1201px;width:1442px;height:46px;background:#e1e3e7;border-top:1.5px solid #cfd2d7"></div>
<div class="t" style="left:577px;top:1217.5px;font-size:16.8px;color:#262a30">演示</div>
<div class="a" style="left:622px;top:1210px;width:61px;height:31px;border-radius:16px;background:#bfc3ca"></div><div class="a" style="left:625px;top:1213px;width:25px;height:25px;border-radius:50%;background:#fff"></div><div class="t" style="left:659px;top:1217.5px;font-size:17.5px;color:#e8eaed">N</div>
<div class="a" style="left:700px;top:1210px;width:1.5px;height:30px;background:#d0d3d8"></div>
<div class="t" style="left:718px;top:1217.5px;font-size:16.8px;color:#262a30">回放</div>
<div class="a" style="left:763px;top:1210px;width:61px;height:31px;border-radius:16px;background:#bfc3ca"></div><div class="a" style="left:766px;top:1213px;width:25px;height:25px;border-radius:50%;background:#fff"></div><div class="t" style="left:800px;top:1217.5px;font-size:17.5px;color:#e8eaed">N</div>
<div class="a" style="left:841px;top:1210px;width:1.5px;height:30px;background:#d0d3d8"></div>
<div class="a" style="left:983px;top:1210px;width:1.5px;height:30px;background:#d0d3d8"></div>
<div class="a" style="left:1115px;top:1210px;width:1.5px;height:30px;background:#d0d3d8"></div>
<div class="a" style="left:1245px;top:1210px;width:1.5px;height:30px;background:#d0d3d8"></div>
<div class="t" style="left:854px;top:1217.5px;font-size:16.8px;color:#262a30">运行记录：打开</div>
<div class="t" style="left:996px;top:1217.5px;font-size:16.8px;color:#262a30">派单策略: DP1</div>
<div class="t" style="left:1128px;top:1217.5px;font-size:16.8px;color:#262a30">交管策略: TP1</div>
<div class="a" style="left:1898px;top:1207px;width:104px;height:40px;background:#e3e5e9;border-radius:4px 0 0 0;box-shadow:-1px -1px 3px rgba(0,0,0,.08)"></div>
<div class="t" style="left:1913px;top:1218px;font-size:17px;color:#8a8e95">20 mm/px</div>
<div id="ov"></div>
<div class="a" style="left:252px;top:314px;width:1512px;height:634px;background:#fff;border-radius:6px;box-shadow:0 4px 16px rgba(0,0,0,.12)">
<div class="t" style="left:29px;top:19px;font-size:19.6px;color:#1f2329">自定义搜索方案</div><svg class="a" style="left:1416px;top:17px" width="24" height="24" viewBox="0 0 24 24"><path d="M14 10l6-6M15.5 3.5h5v5M10 14l-6 6M3.5 15.5v5h5" fill="none" stroke="#45484d" stroke-width="2.3" stroke-linecap="square"/></svg><svg class="a" style="left:1474px;top:19px" width="20" height="20" viewBox="0 0 20 20"><path d="M3 3l14 14M17 3L3 17" stroke="#45484d" stroke-width="2.9" stroke-linecap="round"/></svg><div class="a" style="left:0;top:57px;width:1512px;height:1.5px;background:#e6e8eb"></div><div class="a" style="left:358.5px;top:58px;width:1.5px;height:576px;background:#e6e8eb"></div><div class="a" style="left:11px;top:80px;width:336px;height:45px;border:2px solid #2d55ff;border-radius:5px;background:#e9f1ff"></div><svg class="a" style="left:101px;top:95px" width="16" height="16" viewBox="0 0 16 16"><path d="M8 0.5v15M0.5 8h15" stroke="#1a3cff" stroke-width="1.8"/></svg><div class="t" style="left:122px;top:92px;font-size:19.6px;color:#1a3cff">新增自定义方案</div><div class="a" style="left:11px;top:136px;width:336px;height:50.5px;border-radius:5px;background:#1a3cff"></div><div class="t" style="left:34px;top:151px;font-size:19.6px;color:#fff">停靠点</div><div class="a" style="left:382px;top:80px;width:76px;height:45px;border:2px solid #2d55ff;border-radius:6px;background:#e9f1ff"></div><div class="t" style="left:382px;top:92.5px;width:76px;text-align:center;font-size:19.6px;color:#1a3cff">查询</div><div class="a" style="left:480px;top:80px;width:135px;height:45px;border:2px solid #2d55ff;border-radius:6px;background:#e9f1ff"></div><div class="t" style="left:480px;top:92.5px;width:135px;text-align:center;font-size:19.6px;color:#1a3cff">保存并查询</div><div class="a" style="left:637px;top:80px;width:115px;height:45px;border:2px solid #ff8a3d;border-radius:6px;background:#fff6ef"></div><div class="t" style="left:637px;top:92.5px;width:115px;text-align:center;font-size:19.6px;color:#ff6a00">删除方案</div><div class="t" style="left:382px;top:174px;font-size:19.6px;color:#85898f">您可以将此搜索方案保存下来，方便后续再次查询</div><div class="t" style="left:382px;top:210px;font-size:19.6px;color:#3a3e44">方案名称</div><div class="t" style="left:768px;top:210px;font-size:19.6px;color:#3a3e44">元素类别<span style="color:#e0202a;font-weight:bold;margin-left:3px">*</span></div><div class="a" style="left:382px;top:240px;width:364px;height:44px;border:1.5px solid #c5c9cf;border-radius:5px;background:#fff"></div><div class="t" style="left:400px;top:253px;font-size:19.6px;color:#1f2329">停靠点</div><div class="a" style="left:768px;top:240px;width:364px;height:44px;border:1.5px solid #c5c9cf;border-radius:5px;background:#fff"></div><div class="t" style="left:786px;top:253px;font-size:19.6px;color:#1f2329">点位</div><div class="a" style="left:1104px;top:260.0px;width:0;height:0;border-left:6px solid transparent;border-right:6px solid transparent;border-top:7px solid #5f6369"></div><div class="a" style="left:382px;top:308px;width:1107px;height:304px;border-radius:6px;overflow:hidden;background:#fff"><div class="a" style="left:0;top:0;width:57px;height:290px;background:#edf3ff;border-right:1.5px solid #e3e6ea"></div><div class="a" style="left:11px;top:95px;width:35px;height:102px;border-radius:5px;background:#fff"></div><div class="a" style="left:12px;top:97px;width:33px;height:52px;border-radius:4px;background:#1a3cff"></div><div class="t" style="left:28px;top:123px;transform:translate(-50%,-50%) rotate(90deg);font-size:19px;font-weight:bold;color:#fff">AND</div><div class="t" style="left:28px;top:173px;transform:translate(-50%,-50%) rotate(90deg);font-size:19px;font-weight:bold;color:#8e9399">OR</div><div class="a" style="left:57px;top:68px;width:1050px;height:1.5px;background:#e3e6ea"></div><svg class="a" style="left:69px;top:21px" width="22" height="26" viewBox="0 0 22 26"><path d="M8 3.5V1.5h6v2" fill="none" stroke="#22262c" stroke-width="2"/><path d="M1 4.5h20" stroke="#22262c" stroke-width="2.2"/><path d="M3 6.5v17.5h16V6.5" fill="none" stroke="#22262c" stroke-width="2.2"/><path d="M7.5 9v12M11 9v12M14.5 9v12" stroke="#22262c" stroke-width="1.6"/></svg><div class="a" style="left:103px;top:12px;width:335px;height:44px;border:1.5px solid #c5c9cf;border-radius:5px;background:#fff"></div><div class="t" style="left:121px;top:25px;font-size:19.6px;color:#1f2329">名称</div><div class="a" style="left:410px;top:32.0px;width:0;height:0;border-left:6px solid transparent;border-right:6px solid transparent;border-top:7px solid #5f6369"></div><div class="a" style="left:450px;top:12px;width:335px;height:44px;border:1.5px solid #c5c9cf;border-radius:5px;background:#fff"></div><div class="t" style="left:468px;top:25px;font-size:19.6px;color:#1f2329">等于</div><div class="a" style="left:757px;top:32.0px;width:0;height:0;border-left:6px solid transparent;border-right:6px solid transparent;border-top:7px solid #5f6369"></div><div class="a" style="left:797px;top:12px;width:400px;height:44px;border:1.5px solid #c5c9cf;border-radius:5px;background:#fff"></div><div class="t" style="left:815px;top:25px;font-size:19.6px;color:#1f2329">AP</div><div class="a" style="left:57px;top:69px;width:56px;height:166px;background:#edf3ff;border-right:1.5px solid #e3e6ea"></div><div class="a" style="left:69px;top:83px;width:33px;height:102px;border-radius:5px;background:#fff"></div><div class="a" style="left:69px;top:83px;width:33px;height:54px;border-radius:4px;background:#1a3cff"></div><div class="t" style="left:85.5px;top:110px;transform:translate(-50%,-50%) rotate(90deg);font-size:19px;font-weight:bold;color:#fff">AND</div><div class="t" style="left:85.5px;top:160px;transform:translate(-50%,-50%) rotate(90deg);font-size:19px;font-weight:bold;color:#8e9399">OR</div><div class="a" style="left:69px;top:190px;width:33px;height:33px;border-radius:5px;background:#fff"></div><svg class="a" style="left:74px;top:193px" width="22" height="26" viewBox="0 0 22 26"><path d="M8 3.5V1.5h6v2" fill="none" stroke="#22262c" stroke-width="2"/><path d="M1 4.5h20" stroke="#22262c" stroke-width="2.2"/><path d="M3 6.5v17.5h16V6.5" fill="none" stroke="#22262c" stroke-width="2.2"/><path d="M7.5 9v12M11 9v12M14.5 9v12" stroke="#22262c" stroke-width="1.6"/></svg><svg class="a" style="left:125px;top:89px" width="22" height="26" viewBox="0 0 22 26"><path d="M8 3.5V1.5h6v2" fill="none" stroke="#22262c" stroke-width="2"/><path d="M1 4.5h20" stroke="#22262c" stroke-width="2.2"/><path d="M3 6.5v17.5h16V6.5" fill="none" stroke="#22262c" stroke-width="2.2"/><path d="M7.5 9v12M11 9v12M14.5 9v12" stroke="#22262c" stroke-width="1.6"/></svg><div class="a" style="left:159px;top:81px;width:335px;height:44px;border:1.5px solid #c5c9cf;border-radius:5px;background:#fff"></div><div class="t" style="left:177px;top:94px;font-size:19.6px;color:#1f2329">允许充电</div><div class="a" style="left:466px;top:101.0px;width:0;height:0;border-left:6px solid transparent;border-right:6px solid transparent;border-top:7px solid #5f6369"></div><div class="a" style="left:506px;top:81px;width:335px;height:44px;border:1.5px solid #c5c9cf;border-radius:5px;background:#fff"></div><div class="t" style="left:524px;top:94px;font-size:19.6px;color:#1f2329">等于</div><div class="a" style="left:813px;top:101.0px;width:0;height:0;border-left:6px solid transparent;border-right:6px solid transparent;border-top:7px solid #5f6369"></div><div class="a" style="left:852px;top:88px;width:63px;height:32px;border-radius:16px;background:#3f6bff;box-shadow:0 0 0 1.5px #9ab8ff"></div><div class="a" style="left:886px;top:91.5px;width:25.5px;height:25.5px;border-radius:50%;background:#fff"></div><div class="t" style="left:864px;top:96px;font-size:17px;color:#fff">Y</div><svg class="a" style="left:136px;top:147px" width="16" height="16" viewBox="0 0 16 16"><path d="M8 0.5v15M0.5 8h15" stroke="#1a3cff" stroke-width="1.8"/></svg><div class="t" style="left:158px;top:145px;font-size:19.6px;color:#1a3cff">条件</div><svg class="a" style="left:231px;top:147px" width="16" height="16" viewBox="0 0 16 16"><path d="M8 0.5v15M0.5 8h15" stroke="#1a3cff" stroke-width="1.8"/></svg><div class="t" style="left:253px;top:145px;font-size:19.6px;color:#1a3cff">条件组</div><div class="a" style="left:57px;top:234px;width:1050px;height:1.5px;background:#e3e6ea"></div><svg class="a" style="left:79px;top:257px" width="16" height="16" viewBox="0 0 16 16"><path d="M8 0.5v15M0.5 8h15" stroke="#1a3cff" stroke-width="1.8"/></svg><div class="t" style="left:101px;top:255px;font-size:19.6px;color:#1a3cff">条件</div><svg class="a" style="left:175px;top:257px" width="16" height="16" viewBox="0 0 16 16"><path d="M8 0.5v15M0.5 8h15" stroke="#1a3cff" stroke-width="1.8"/></svg><div class="t" style="left:197px;top:255px;font-size:19.6px;color:#1a3cff">条件组</div><div class="a" style="left:0;top:290px;width:1107px;height:14px;background:#f0f0f0;border-top:1px solid #e0e0e0"></div><div class="a" style="left:2px;top:292px;width:1017px;height:10px;border-radius:5px;background:#a3a3a3"></div><div class="a" style="left:0;top:0;width:1107px;height:304px;border:1.5px solid #e3e6ea;border-radius:6px"></div></div>
</div>
</div>
</body></html>
